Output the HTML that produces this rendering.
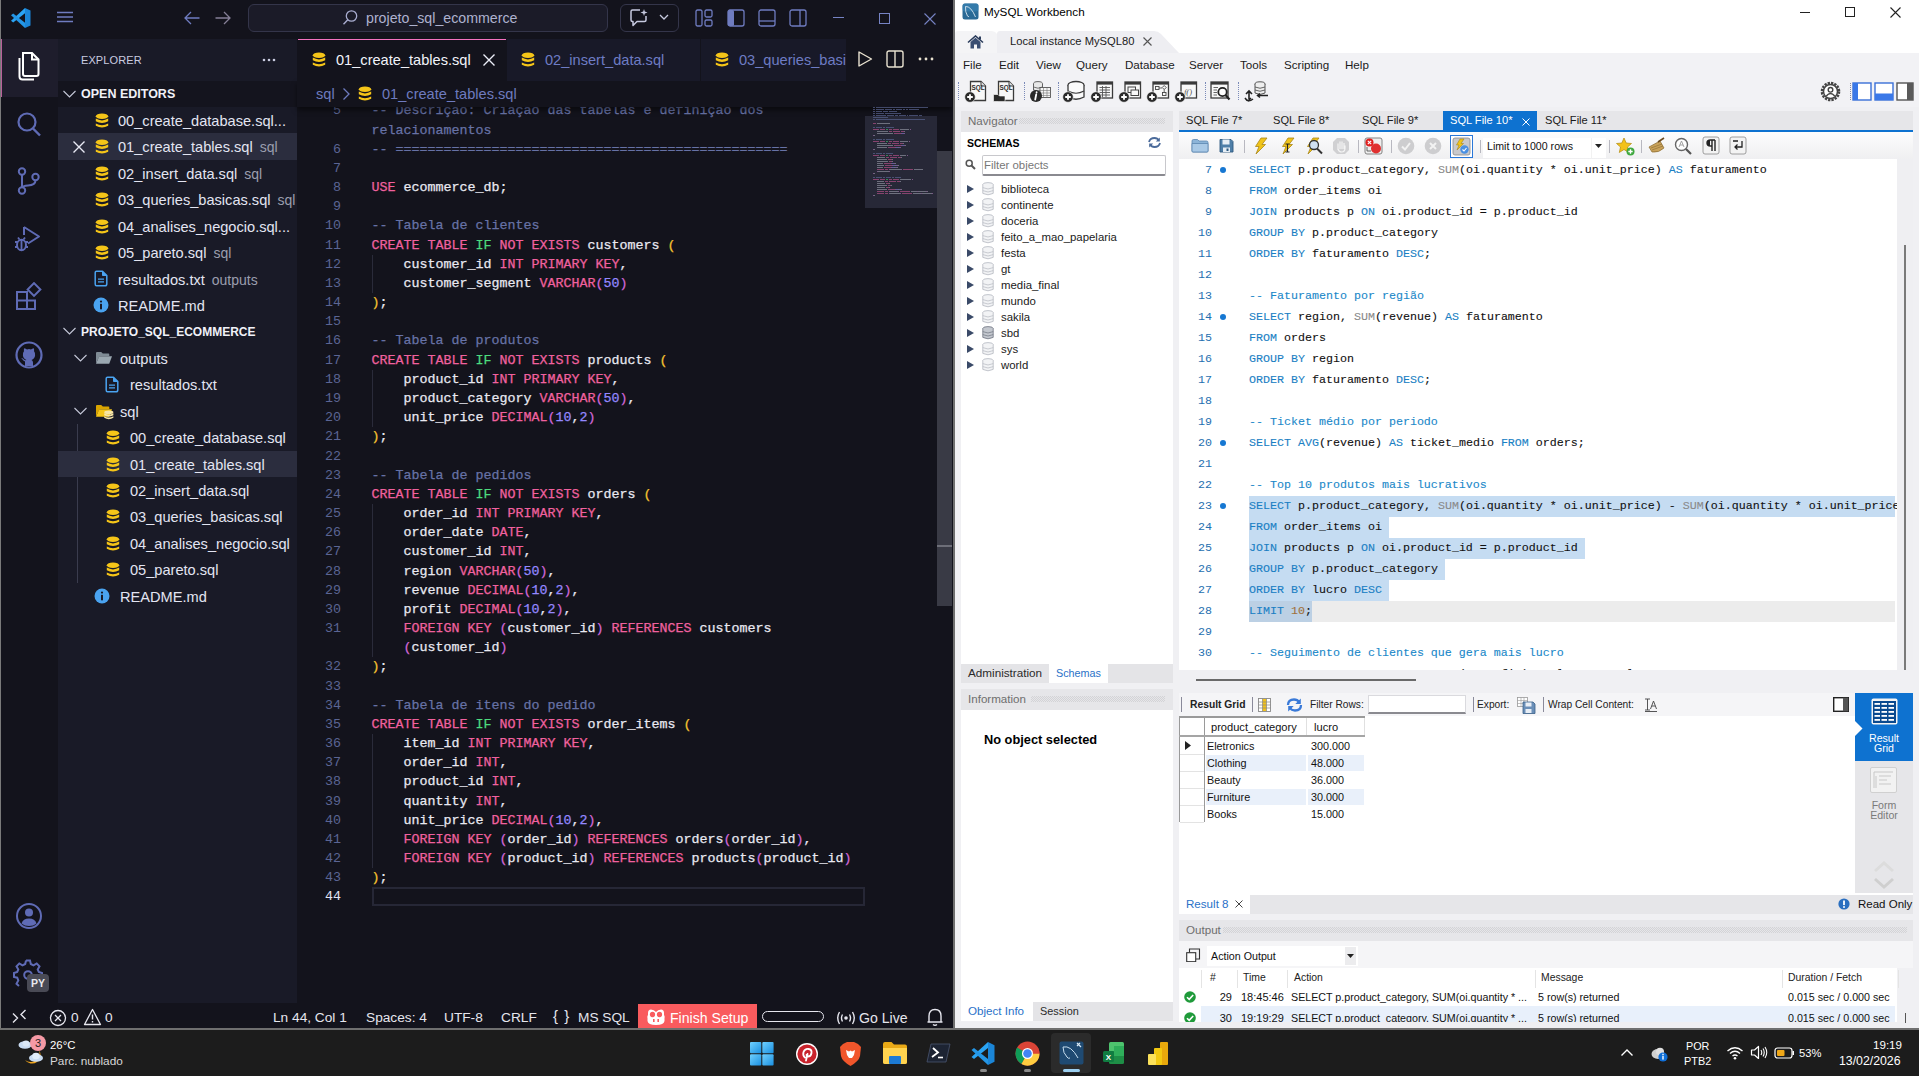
<!DOCTYPE html>
<html><head><meta charset="utf-8">
<style>
*{margin:0;padding:0;box-sizing:border-box}
html,body{width:1919px;height:1076px;overflow:hidden;background:#6f6f6f;font-family:"Liberation Sans",sans-serif}
.a{position:absolute}
.mono{font-family:"Liberation Mono",monospace}
svg{display:block}
#vsc{position:absolute;left:0;top:0;width:955px;height:1028px;background:#13131c;overflow:hidden}
#wb{position:absolute;left:955px;top:0;width:964px;height:1028px;background:#f0f0f3;overflow:hidden}
#tb{position:absolute;left:0;top:1030px;width:1919px;height:46px;background:#1c1c1c}
</style></head><body>

<div id="vsc">
<div class="a" style="left:0;top:0;width:953px;height:39px;background:#13131c"></div>
<div class="a" style="left:58px;top:39px;width:239px;height:964px;background:#191a27"></div>
<div class="a" style="left:297px;top:39px;width:656px;height:964px;background:#13131c"></div>
<svg class="a" style="left:10px;top:7px" width="22" height="22" viewBox="0 0 22 22"><path d="M15 1 L20.5 3.6 V18.4 L15 21Z" fill="#1b86d8"/><path d="M15 1 L15 6.2 L3.2 15.6 L1 13.8Z" fill="#2aa4f4"/><path d="M15 21 L15 15.8 L3.2 6.4 L1 8.2Z" fill="#2496e6"/></svg>
<svg class="a" style="left:56px;top:10px" width="18" height="14" viewBox="0 0 18 14"><path d="M1 2.5H17M1 7H17M1 11.5H17" stroke="#6f7cc0" stroke-width="1.3"/></svg>
<svg class="a" style="left:183px;top:10px" width="18" height="16" viewBox="0 0 18 16"><path d="M16.5 8H2M8 2L2 8L8 14" fill="none" stroke="#6f7cc0" stroke-width="1.3"/></svg>
<svg class="a" style="left:214px;top:10px" width="18" height="16" viewBox="0 0 18 16"><path d="M1.5 8H16M10 2L16 8L10 14" fill="none" stroke="#857f96" stroke-width="1.3"/></svg>
<div class="a" style="left:248px;top:4px;width:360px;height:28px;border:1px solid #34354a;border-radius:6px;background:#1b1b28"></div>
<svg class="a" style="left:342px;top:9px" width="17" height="17" viewBox="0 0 17 17"><circle cx="9.5" cy="7" r="5.2" fill="none" stroke="#a9add0" stroke-width="1.3"/><path d="M5.8 10.8L1.5 15.2" stroke="#a9add0" stroke-width="1.4"/></svg>
<div class="a" style="left:366px;top:9px;font-size:14.2px;line-height:18px;color:#aeb2cf">projeto_sql_ecommerce</div>
<div class="a" style="left:620px;top:4px;width:59px;height:28px;border:1px solid #34354a;border-radius:6px"></div>
<svg class="a" style="left:628px;top:8px" width="22" height="20" viewBox="0 0 22 20"><path d="M3 3.5 Q3 2 4.5 2 H12 M18 8 V12 Q18 13.5 16.5 13.5 H9 L5 17.5 V13.5 H4.5 Q3 13.5 3 12 V3.5" fill="none" stroke="#c7cae0" stroke-width="1.5" stroke-linejoin="round"/><path d="M16 1 L16.8 3.6 L19.5 4.5 L16.8 5.4 L16 8 L15.2 5.4 L12.5 4.5 L15.2 3.6Z" fill="#c7cae0"/></svg>
<svg class="a" style="left:659px;top:13px" width="10" height="8" viewBox="0 0 10 8"><path d="M1 2L5 6L9 2" fill="none" stroke="#c7cae0" stroke-width="1.3"/></svg>
<svg class="a" style="left:695px;top:9px" width="18" height="18" viewBox="0 0 18 18"><rect x="1" y="1" width="6" height="16" rx="1.5" fill="none" stroke="#6f7cc0" stroke-width="1.3"/><rect x="10" y="1" width="7" height="7" rx="1.5" fill="none" stroke="#6f7cc0" stroke-width="1.3"/><rect x="10" y="11" width="7" height="6" rx="1.5" fill="none" stroke="#6f7cc0" stroke-width="1.3"/></svg>
<svg class="a" style="left:727px;top:9px" width="18" height="18" viewBox="0 0 18 18"><rect x="1" y="1" width="16" height="16" rx="2" fill="none" stroke="#6f7cc0" stroke-width="1.3"/><rect x="1" y="1" width="6" height="16" rx="1.5" fill="#6f7cc0"/></svg>
<svg class="a" style="left:758px;top:9px" width="18" height="18" viewBox="0 0 18 18"><rect x="1" y="1" width="16" height="16" rx="2" fill="none" stroke="#6f7cc0" stroke-width="1.3"/><path d="M1 12H17" stroke="#6f7cc0" stroke-width="1.3"/></svg>
<svg class="a" style="left:789px;top:9px" width="18" height="18" viewBox="0 0 18 18"><rect x="1" y="1" width="16" height="16" rx="2" fill="none" stroke="#6f7cc0" stroke-width="1.3"/><path d="M11 1V17" stroke="#6f7cc0" stroke-width="1.3"/></svg>
<div class="a" style="left:833px;top:17px;width:11px;height:1px;background:#7683c4"></div>
<div class="a" style="left:879px;top:13px;width:11px;height:11px;border:1px solid #7683c4"></div>
<svg class="a" style="left:924px;top:13px" width="12" height="12" viewBox="0 0 12 12"><path d="M0.5 0.5L11.5 11.5M11.5 0.5L0.5 11.5" stroke="#7683c4" stroke-width="1.1"/></svg>
<div class="a" style="left:1px;top:39px;width:57px;height:58px;background:#1e1d2c"></div>
<div class="a" style="left:1px;top:39px;width:1px;height:58px;background:#b8609a"></div>
<svg class="a" style="left:15px;top:51px" width="28" height="30" viewBox="0 0 28 30"><path d="M8 2 H17 L23.5 8.5 V23 Q23.5 25 21.5 25 H10 Q8 25 8 23Z" fill="none" stroke="#fff" stroke-width="2"/><path d="M17 2 V8.5 H23.5" fill="none" stroke="#fff" stroke-width="2"/><path d="M4.5 7 V25.5 Q4.5 28.5 7.5 28.5 H19" fill="none" stroke="#fff" stroke-width="2"/></svg>
<svg class="a" style="left:14px;top:110px" width="30" height="30" viewBox="0 0 30 30"><circle cx="13" cy="12" r="8.5" fill="none" stroke="#5f6bb5" stroke-width="2.2"/><path d="M19 18.5 L26 25.5" stroke="#5f6bb5" stroke-width="2.4"/></svg>
<svg class="a" style="left:14px;top:166px" width="30" height="30" viewBox="0 0 30 30"><circle cx="8" cy="5.5" r="3.2" fill="none" stroke="#5f6bb5" stroke-width="2"/><circle cx="8" cy="24.5" r="3.2" fill="none" stroke="#5f6bb5" stroke-width="2"/><circle cx="21.5" cy="11" r="3.2" fill="none" stroke="#5f6bb5" stroke-width="2"/><path d="M8 8.7V21.3 M21.5 14.2 Q21.5 19 14 19.5 Q8.5 20 8 21.3" fill="none" stroke="#5f6bb5" stroke-width="2"/></svg>
<svg class="a" style="left:13px;top:224px" width="30" height="30" viewBox="0 0 30 30"><path d="M11 3 L26 12.5 L15 19.5" fill="none" stroke="#5f6bb5" stroke-width="2" stroke-linejoin="round"/><path d="M11 3V11" stroke="#5f6bb5" stroke-width="2"/><ellipse cx="8.5" cy="21" rx="4.5" ry="5.2" fill="none" stroke="#5f6bb5" stroke-width="2"/><path d="M2 18H5 M2 23H4.5 M12 18H15 M12.5 23H15 M8.5 16V26 M5 13.5L6.5 15.5 M12 13.5L10.5 15.5" stroke="#5f6bb5" stroke-width="1.8"/></svg>
<svg class="a" style="left:14px;top:282px" width="30" height="30" viewBox="0 0 30 30"><path d="M3 10 H13 V27 H3Z M3 18.5 H21 V27 H13" fill="none" stroke="#5f6bb5" stroke-width="2"/><rect x="15.5" y="3" width="9" height="9" transform="rotate(45 20 7.5)" fill="none" stroke="#5f6bb5" stroke-width="2"/></svg>
<svg class="a" style="left:14px;top:340px" width="30" height="30" viewBox="0 0 30 30"><circle cx="15" cy="15" r="12.5" fill="none" stroke="#5f6bb5" stroke-width="2.2"/><path d="M11 26 V21.5 Q9.5 21 8.5 19.5 Q7.8 18.2 7 18 Q9 17.8 10 19.5 Q11 20.5 12.5 20 Q11 19.5 9.8 18 Q8.5 16 9 13.5 Q9.2 12.2 10 11.2 Q9.6 9.6 10.2 8.2 Q12 8.4 13 9.4 Q15 8.8 17 9.4 Q18 8.4 19.8 8.2 Q20.4 9.6 20 11.2 Q20.8 12.2 21 13.5 Q21.5 16 20.2 18 Q19 19.5 17.5 20 Q19 20.8 19 22.5 V26" fill="#5f6bb5"/></svg>
<svg class="a" style="left:14px;top:901px" width="30" height="30" viewBox="0 0 30 30"><circle cx="15" cy="15" r="12" fill="none" stroke="#5f6bb5" stroke-width="2"/><circle cx="15" cy="11.5" r="4" fill="#5f6bb5"/><path d="M7.5 22.5 Q9 17.5 15 17.5 Q21 17.5 22.5 22.5 Q19.5 25 15 25 Q10.5 25 7.5 22.5Z" fill="#5f6bb5"/></svg>
<svg class="a" style="left:13px;top:958px" width="30" height="30" viewBox="0 0 30 30"><path d="M13 2.5 H17 L17.8 6 L20.5 7.3 L23.7 5.5 L26.5 8.3 L24.7 11.5 L25.8 14 L29 15 V19 L25.8 19.7" fill="none" stroke="#5f6bb5" stroke-width="2"/><path d="M13 2.5 L12.2 6 L9.5 7.3 L6.3 5.5 L3.5 8.3 L5.3 11.5 L4.2 14 L1 15 V19 L4.2 19.7 L5.3 22.5 L3.5 25.7 L6 28" fill="none" stroke="#5f6bb5" stroke-width="2"/><circle cx="15" cy="17" r="3.8" fill="none" stroke="#5f6bb5" stroke-width="2"/></svg>
<div class="a" style="left:27px;top:974px;width:22px;height:18px;border-radius:4px;background:#494a55;color:#e8e8ee;font-size:10.5px;font-weight:bold;line-height:18px;text-align:center">PY</div>
<div class="a" style="left:81px;top:52px;font-size:11px;line-height:16px;color:#c9cce0;letter-spacing:0.1px">EXPLORER</div>
<div class="a" style="left:262px;top:58px;width:14px;height:4px"><svg width="14" height="4"><circle cx="2" cy="2" r="1.3" fill="#c9cce0"/><circle cx="7" cy="2" r="1.3" fill="#c9cce0"/><circle cx="12" cy="2" r="1.3" fill="#c9cce0"/></svg></div>
<div class="a" style="left:58px;top:81px;width:239px;height:26px;background:#14141e"></div>
<svg class="a" style="left:62px;top:87px" width="15" height="14" viewBox="0 0 15 14"><path d="M1.5 4 L7.5 10 L13.5 4" fill="none" stroke="#c5c8d8" stroke-width="1.1"/></svg>
<div class="a" style="left:81px;top:86px;font-size:12.5px;line-height:17px;font-weight:bold;color:#f0f1f8">OPEN EDITORS</div>
<div class="a" style="left:58px;top:133px;width:239px;height:27px;background:#2b2d3e"></div>
<svg class="a" style="left:95px;top:113px" width="14" height="16" viewBox="0 0 14 16"><ellipse cx="7" cy="3.2" rx="6.2" ry="2.8" fill="#f5c518"/><path d="M0.8 5.6 Q7 9.2 13.2 5.6 V8.2 Q7 11.6 0.8 8.2Z" fill="#f5c518"/><path d="M0.8 10.4 Q7 14 13.2 10.4 V12.8 Q7 16.4 0.8 12.8Z" fill="#f5c518"/></svg>
<div class="a" style="left:118px;top:111px;height:20px;line-height:20px;font-size:14.6px;color:#e3e5f2;white-space:nowrap">00_create_database.sql...</div>
<svg class="a" style="left:95px;top:139px" width="14" height="16" viewBox="0 0 14 16"><ellipse cx="7" cy="3.2" rx="6.2" ry="2.8" fill="#f5c518"/><path d="M0.8 5.6 Q7 9.2 13.2 5.6 V8.2 Q7 11.6 0.8 8.2Z" fill="#f5c518"/><path d="M0.8 10.4 Q7 14 13.2 10.4 V12.8 Q7 16.4 0.8 12.8Z" fill="#f5c518"/></svg>
<div class="a" style="left:118px;top:137px;height:20px;line-height:20px;font-size:14.6px;color:#e3e5f2;white-space:nowrap">01_create_tables.sql<span style="color:#9b9eae;font-size:14px;margin-left:7px">sql</span></div>
<svg class="a" style="left:95px;top:166px" width="14" height="16" viewBox="0 0 14 16"><ellipse cx="7" cy="3.2" rx="6.2" ry="2.8" fill="#f5c518"/><path d="M0.8 5.6 Q7 9.2 13.2 5.6 V8.2 Q7 11.6 0.8 8.2Z" fill="#f5c518"/><path d="M0.8 10.4 Q7 14 13.2 10.4 V12.8 Q7 16.4 0.8 12.8Z" fill="#f5c518"/></svg>
<div class="a" style="left:118px;top:164px;height:20px;line-height:20px;font-size:14.6px;color:#e3e5f2;white-space:nowrap">02_insert_data.sql<span style="color:#9b9eae;font-size:14px;margin-left:7px">sql</span></div>
<svg class="a" style="left:95px;top:192px" width="14" height="16" viewBox="0 0 14 16"><ellipse cx="7" cy="3.2" rx="6.2" ry="2.8" fill="#f5c518"/><path d="M0.8 5.6 Q7 9.2 13.2 5.6 V8.2 Q7 11.6 0.8 8.2Z" fill="#f5c518"/><path d="M0.8 10.4 Q7 14 13.2 10.4 V12.8 Q7 16.4 0.8 12.8Z" fill="#f5c518"/></svg>
<div class="a" style="left:118px;top:190px;height:20px;line-height:20px;font-size:14.6px;color:#e3e5f2;white-space:nowrap">03_queries_basicas.sql<span style="color:#9b9eae;font-size:14px;margin-left:7px">sql</span></div>
<svg class="a" style="left:95px;top:219px" width="14" height="16" viewBox="0 0 14 16"><ellipse cx="7" cy="3.2" rx="6.2" ry="2.8" fill="#f5c518"/><path d="M0.8 5.6 Q7 9.2 13.2 5.6 V8.2 Q7 11.6 0.8 8.2Z" fill="#f5c518"/><path d="M0.8 10.4 Q7 14 13.2 10.4 V12.8 Q7 16.4 0.8 12.8Z" fill="#f5c518"/></svg>
<div class="a" style="left:118px;top:217px;height:20px;line-height:20px;font-size:14.6px;color:#e3e5f2;white-space:nowrap">04_analises_negocio.sql...</div>
<svg class="a" style="left:95px;top:245px" width="14" height="16" viewBox="0 0 14 16"><ellipse cx="7" cy="3.2" rx="6.2" ry="2.8" fill="#f5c518"/><path d="M0.8 5.6 Q7 9.2 13.2 5.6 V8.2 Q7 11.6 0.8 8.2Z" fill="#f5c518"/><path d="M0.8 10.4 Q7 14 13.2 10.4 V12.8 Q7 16.4 0.8 12.8Z" fill="#f5c518"/></svg>
<div class="a" style="left:118px;top:243px;height:20px;line-height:20px;font-size:14.6px;color:#e3e5f2;white-space:nowrap">05_pareto.sql<span style="color:#9b9eae;font-size:14px;margin-left:7px">sql</span></div>
<svg class="a" style="left:72px;top:140px" width="14" height="14" viewBox="0 0 14 14"><path d="M1.5 1.5L12.5 12.5M12.5 1.5L1.5 12.5" stroke="#e8eaf5" stroke-width="1.4"/></svg>
<svg class="a" style="left:94px;top:270px" width="14" height="17" viewBox="0 0 14 17"><path d="M2.5 1.2 H8.5 L12.8 5.5 V14 Q12.8 15.8 11 15.8 H2.5 Q1.2 15.8 1.2 14 V2.5 Q1.2 1.2 2.5 1.2Z" fill="none" stroke="#4aa3f0" stroke-width="1.5" stroke-linejoin="round"/><path d="M8.5 1.2 V5.5 H12.8" fill="#4aa3f0" stroke="#4aa3f0" stroke-width="1"/><path d="M4 9.2H10M4 11.8H10" stroke="#4aa3f0" stroke-width="1.2"/></svg>
<div class="a" style="left:118px;top:270px;height:20px;line-height:20px;font-size:14.6px;color:#e3e5f2;white-space:nowrap">resultados.txt<span style="color:#9b9eae;font-size:14px;margin-left:7px">outputs</span></div>
<svg class="a" style="left:93px;top:297px" width="16" height="16" viewBox="0 0 16 16"><circle cx="8" cy="8" r="7.5" fill="#4aa3f0"/><rect x="7" y="6.8" width="2" height="5.5" fill="#191a27"/><circle cx="8" cy="4.6" r="1.1" fill="#191a27"/></svg>
<div class="a" style="left:118px;top:296px;height:20px;line-height:20px;font-size:14.6px;color:#e3e5f2;white-space:nowrap">README.md</div>
<svg class="a" style="left:62px;top:324px" width="15" height="14" viewBox="0 0 15 14"><path d="M1.5 4 L7.5 10 L13.5 4" fill="none" stroke="#c5c8d8" stroke-width="1.1"/></svg>
<div class="a" style="left:81px;top:324px;font-size:12px;line-height:17px;font-weight:bold;color:#f0f1f8">PROJETO_SQL_ECOMMERCE</div>
<svg class="a" style="left:73px;top:351px" width="15" height="14" viewBox="0 0 15 14"><path d="M1.5 4 L7.5 10 L13.5 4" fill="none" stroke="#c5c8d8" stroke-width="1.1"/></svg>
<svg class="a" style="left:95px;top:351px" width="18" height="14" viewBox="0 0 18 14"><path d="M1 12.5 V2 Q1 1 2 1 H6.2 L7.8 2.6 H13.5 Q14.3 2.6 14.3 3.4 V5 H4.5 Z" fill="#7f8b95"/><path d="M4.2 5.2 H17 L14.2 12.8 H1Z" fill="#9aa7b0"/></svg>
<div class="a" style="left:120px;top:349px;height:20px;line-height:20px;font-size:14.6px;color:#e3e5f2;white-space:nowrap">outputs</div>
<svg class="a" style="left:105px;top:376px" width="14" height="17" viewBox="0 0 14 17"><path d="M2.5 1.2 H8.5 L12.8 5.5 V14 Q12.8 15.8 11 15.8 H2.5 Q1.2 15.8 1.2 14 V2.5 Q1.2 1.2 2.5 1.2Z" fill="none" stroke="#4aa3f0" stroke-width="1.5" stroke-linejoin="round"/><path d="M8.5 1.2 V5.5 H12.8" fill="#4aa3f0" stroke="#4aa3f0" stroke-width="1"/><path d="M4 9.2H10M4 11.8H10" stroke="#4aa3f0" stroke-width="1.2"/></svg>
<div class="a" style="left:130px;top:375px;height:20px;line-height:20px;font-size:14.6px;color:#e3e5f2;white-space:nowrap">resultados.txt</div>
<svg class="a" style="left:73px;top:404px" width="15" height="14" viewBox="0 0 15 14"><path d="M1.5 4 L7.5 10 L13.5 4" fill="none" stroke="#c5c8d8" stroke-width="1.1"/></svg>
<svg class="a" style="left:95px;top:404px" width="19" height="16" viewBox="0 0 19 16"><path d="M1 12.5 V2 Q1 1 2 1 H6.2 L7.8 2.6 H13.5 Q14.3 2.6 14.3 3.4 V5 H4.5 Z" fill="#d9a400"/><path d="M4.2 5.2 H17 L14.2 12.8 H1Z" fill="#f5c518"/><ellipse cx="13.8" cy="8.3" rx="4.6" ry="1.9" fill="#f8e6a6"/><path d="M9.2 9.3 Q13.8 12 18.4 9.3 V11.2 Q13.8 13.9 9.2 11.2Z" fill="#f8e6a6"/><path d="M9.2 12.2 Q13.8 14.9 18.4 12.2 V13.8 Q13.8 16.5 9.2 13.8Z" fill="#f8e6a6"/></svg>
<div class="a" style="left:120px;top:402px;height:20px;line-height:20px;font-size:14.6px;color:#e3e5f2;white-space:nowrap">sql</div>
<div class="a" style="left:77px;top:424px;width:1px;height:159px;background:#3a3c4e"></div>
<div class="a" style="left:58px;top:451px;width:239px;height:26px;background:#2b2d3e"></div>
<svg class="a" style="left:106px;top:430px" width="14" height="16" viewBox="0 0 14 16"><ellipse cx="7" cy="3.2" rx="6.2" ry="2.8" fill="#f5c518"/><path d="M0.8 5.6 Q7 9.2 13.2 5.6 V8.2 Q7 11.6 0.8 8.2Z" fill="#f5c518"/><path d="M0.8 10.4 Q7 14 13.2 10.4 V12.8 Q7 16.4 0.8 12.8Z" fill="#f5c518"/></svg>
<div class="a" style="left:130px;top:428px;height:20px;line-height:20px;font-size:14.6px;color:#e3e5f2;white-space:nowrap">00_create_database.sql</div>
<svg class="a" style="left:106px;top:457px" width="14" height="16" viewBox="0 0 14 16"><ellipse cx="7" cy="3.2" rx="6.2" ry="2.8" fill="#f5c518"/><path d="M0.8 5.6 Q7 9.2 13.2 5.6 V8.2 Q7 11.6 0.8 8.2Z" fill="#f5c518"/><path d="M0.8 10.4 Q7 14 13.2 10.4 V12.8 Q7 16.4 0.8 12.8Z" fill="#f5c518"/></svg>
<div class="a" style="left:130px;top:455px;height:20px;line-height:20px;font-size:14.6px;color:#e3e5f2;white-space:nowrap">01_create_tables.sql</div>
<svg class="a" style="left:106px;top:483px" width="14" height="16" viewBox="0 0 14 16"><ellipse cx="7" cy="3.2" rx="6.2" ry="2.8" fill="#f5c518"/><path d="M0.8 5.6 Q7 9.2 13.2 5.6 V8.2 Q7 11.6 0.8 8.2Z" fill="#f5c518"/><path d="M0.8 10.4 Q7 14 13.2 10.4 V12.8 Q7 16.4 0.8 12.8Z" fill="#f5c518"/></svg>
<div class="a" style="left:130px;top:481px;height:20px;line-height:20px;font-size:14.6px;color:#e3e5f2;white-space:nowrap">02_insert_data.sql</div>
<svg class="a" style="left:106px;top:509px" width="14" height="16" viewBox="0 0 14 16"><ellipse cx="7" cy="3.2" rx="6.2" ry="2.8" fill="#f5c518"/><path d="M0.8 5.6 Q7 9.2 13.2 5.6 V8.2 Q7 11.6 0.8 8.2Z" fill="#f5c518"/><path d="M0.8 10.4 Q7 14 13.2 10.4 V12.8 Q7 16.4 0.8 12.8Z" fill="#f5c518"/></svg>
<div class="a" style="left:130px;top:507px;height:20px;line-height:20px;font-size:14.6px;color:#e3e5f2;white-space:nowrap">03_queries_basicas.sql</div>
<svg class="a" style="left:106px;top:536px" width="14" height="16" viewBox="0 0 14 16"><ellipse cx="7" cy="3.2" rx="6.2" ry="2.8" fill="#f5c518"/><path d="M0.8 5.6 Q7 9.2 13.2 5.6 V8.2 Q7 11.6 0.8 8.2Z" fill="#f5c518"/><path d="M0.8 10.4 Q7 14 13.2 10.4 V12.8 Q7 16.4 0.8 12.8Z" fill="#f5c518"/></svg>
<div class="a" style="left:130px;top:534px;height:20px;line-height:20px;font-size:14.6px;color:#e3e5f2;white-space:nowrap">04_analises_negocio.sql</div>
<svg class="a" style="left:106px;top:562px" width="14" height="16" viewBox="0 0 14 16"><ellipse cx="7" cy="3.2" rx="6.2" ry="2.8" fill="#f5c518"/><path d="M0.8 5.6 Q7 9.2 13.2 5.6 V8.2 Q7 11.6 0.8 8.2Z" fill="#f5c518"/><path d="M0.8 10.4 Q7 14 13.2 10.4 V12.8 Q7 16.4 0.8 12.8Z" fill="#f5c518"/></svg>
<div class="a" style="left:130px;top:560px;height:20px;line-height:20px;font-size:14.6px;color:#e3e5f2;white-space:nowrap">05_pareto.sql</div>
<svg class="a" style="left:94px;top:588px" width="16" height="16" viewBox="0 0 16 16"><circle cx="8" cy="8" r="7.5" fill="#4aa3f0"/><rect x="7" y="6.8" width="2" height="5.5" fill="#191a27"/><circle cx="8" cy="4.6" r="1.1" fill="#191a27"/></svg>
<div class="a" style="left:120px;top:587px;height:20px;line-height:20px;font-size:14.6px;color:#e3e5f2;white-space:nowrap">README.md</div>
<div class="a mono" style="left:299px;top:101.4px;width:42px;height:19.2px;line-height:19.2px;text-align:right;font-size:13.33px;color:#5b6594">5</div>
<div class="a mono" style="left:371.5px;top:101.4px;height:19.2px;line-height:19.2px;font-size:13.33px;color:#e9e9f1;white-space:pre;-webkit-text-stroke:0.25px currentColor"><span style="color:#6772a6">-- Descrição: Criação das tabelas e definição dos</span></div>
<div class="a mono" style="left:371.5px;top:120.6px;height:19.2px;line-height:19.2px;font-size:13.33px;color:#e9e9f1;white-space:pre;-webkit-text-stroke:0.25px currentColor"><span style="color:#6772a6">relacionamentos</span></div>
<div class="a mono" style="left:299px;top:139.7px;width:42px;height:19.2px;line-height:19.2px;text-align:right;font-size:13.33px;color:#5b6594">6</div>
<div class="a mono" style="left:371.5px;top:139.7px;height:19.2px;line-height:19.2px;font-size:13.33px;color:#e9e9f1;white-space:pre;-webkit-text-stroke:0.25px currentColor"><span style="color:#6772a6">-- =================================================</span></div>
<div class="a mono" style="left:299px;top:158.9px;width:42px;height:19.2px;line-height:19.2px;text-align:right;font-size:13.33px;color:#5b6594">7</div>
<div class="a mono" style="left:299px;top:178.1px;width:42px;height:19.2px;line-height:19.2px;text-align:right;font-size:13.33px;color:#5b6594">8</div>
<div class="a mono" style="left:371.5px;top:178.1px;height:19.2px;line-height:19.2px;font-size:13.33px;color:#e9e9f1;white-space:pre;-webkit-text-stroke:0.25px currentColor"><span style="color:#f0619f">USE</span> ecommerce_db;</div>
<div class="a mono" style="left:299px;top:197.3px;width:42px;height:19.2px;line-height:19.2px;text-align:right;font-size:13.33px;color:#5b6594">9</div>
<div class="a mono" style="left:299px;top:216.4px;width:42px;height:19.2px;line-height:19.2px;text-align:right;font-size:13.33px;color:#5b6594">10</div>
<div class="a mono" style="left:371.5px;top:216.4px;height:19.2px;line-height:19.2px;font-size:13.33px;color:#e9e9f1;white-space:pre;-webkit-text-stroke:0.25px currentColor"><span style="color:#6772a6">-- Tabela de clientes</span></div>
<div class="a mono" style="left:299px;top:235.6px;width:42px;height:19.2px;line-height:19.2px;text-align:right;font-size:13.33px;color:#5b6594">11</div>
<div class="a mono" style="left:371.5px;top:235.6px;height:19.2px;line-height:19.2px;font-size:13.33px;color:#e9e9f1;white-space:pre;-webkit-text-stroke:0.25px currentColor"><span style="color:#f0619f">CREATE</span> <span style="color:#f0619f">TABLE</span> <span style="color:#4ddc7e">IF</span> <span style="color:#f0619f">NOT</span> <span style="color:#f0619f">EXISTS</span> customers <span style="color:#f5c331">(</span></div>
<div class="a mono" style="left:299px;top:254.8px;width:42px;height:19.2px;line-height:19.2px;text-align:right;font-size:13.33px;color:#5b6594">12</div>
<div class="a mono" style="left:371.5px;top:254.8px;height:19.2px;line-height:19.2px;font-size:13.33px;color:#e9e9f1;white-space:pre;-webkit-text-stroke:0.25px currentColor">    customer_id <span style="color:#f0619f">INT</span> <span style="color:#f0619f">PRIMARY</span> <span style="color:#f0619f">KEY</span>,</div>
<div class="a mono" style="left:299px;top:273.9px;width:42px;height:19.2px;line-height:19.2px;text-align:right;font-size:13.33px;color:#5b6594">13</div>
<div class="a mono" style="left:371.5px;top:273.9px;height:19.2px;line-height:19.2px;font-size:13.33px;color:#e9e9f1;white-space:pre;-webkit-text-stroke:0.25px currentColor">    customer_segment <span style="color:#f0619f">VARCHAR</span><span style="color:#d067d6">(</span><span style="color:#9488ff">50</span><span style="color:#d067d6">)</span></div>
<div class="a mono" style="left:299px;top:293.1px;width:42px;height:19.2px;line-height:19.2px;text-align:right;font-size:13.33px;color:#5b6594">14</div>
<div class="a mono" style="left:371.5px;top:293.1px;height:19.2px;line-height:19.2px;font-size:13.33px;color:#e9e9f1;white-space:pre;-webkit-text-stroke:0.25px currentColor"><span style="color:#f5c331">)</span>;</div>
<div class="a mono" style="left:299px;top:312.3px;width:42px;height:19.2px;line-height:19.2px;text-align:right;font-size:13.33px;color:#5b6594">15</div>
<div class="a mono" style="left:299px;top:331.4px;width:42px;height:19.2px;line-height:19.2px;text-align:right;font-size:13.33px;color:#5b6594">16</div>
<div class="a mono" style="left:371.5px;top:331.4px;height:19.2px;line-height:19.2px;font-size:13.33px;color:#e9e9f1;white-space:pre;-webkit-text-stroke:0.25px currentColor"><span style="color:#6772a6">-- Tabela de produtos</span></div>
<div class="a mono" style="left:299px;top:350.6px;width:42px;height:19.2px;line-height:19.2px;text-align:right;font-size:13.33px;color:#5b6594">17</div>
<div class="a mono" style="left:371.5px;top:350.6px;height:19.2px;line-height:19.2px;font-size:13.33px;color:#e9e9f1;white-space:pre;-webkit-text-stroke:0.25px currentColor"><span style="color:#f0619f">CREATE</span> <span style="color:#f0619f">TABLE</span> <span style="color:#4ddc7e">IF</span> <span style="color:#f0619f">NOT</span> <span style="color:#f0619f">EXISTS</span> products <span style="color:#f5c331">(</span></div>
<div class="a mono" style="left:299px;top:369.8px;width:42px;height:19.2px;line-height:19.2px;text-align:right;font-size:13.33px;color:#5b6594">18</div>
<div class="a mono" style="left:371.5px;top:369.8px;height:19.2px;line-height:19.2px;font-size:13.33px;color:#e9e9f1;white-space:pre;-webkit-text-stroke:0.25px currentColor">    product_id <span style="color:#f0619f">INT</span> <span style="color:#f0619f">PRIMARY</span> <span style="color:#f0619f">KEY</span>,</div>
<div class="a mono" style="left:299px;top:388.9px;width:42px;height:19.2px;line-height:19.2px;text-align:right;font-size:13.33px;color:#5b6594">19</div>
<div class="a mono" style="left:371.5px;top:388.9px;height:19.2px;line-height:19.2px;font-size:13.33px;color:#e9e9f1;white-space:pre;-webkit-text-stroke:0.25px currentColor">    product_category <span style="color:#f0619f">VARCHAR</span><span style="color:#d067d6">(</span><span style="color:#9488ff">50</span><span style="color:#d067d6">)</span>,</div>
<div class="a mono" style="left:299px;top:408.1px;width:42px;height:19.2px;line-height:19.2px;text-align:right;font-size:13.33px;color:#5b6594">20</div>
<div class="a mono" style="left:371.5px;top:408.1px;height:19.2px;line-height:19.2px;font-size:13.33px;color:#e9e9f1;white-space:pre;-webkit-text-stroke:0.25px currentColor">    unit_price <span style="color:#f0619f">DECIMAL</span><span style="color:#d067d6">(</span><span style="color:#9488ff">10</span>,<span style="color:#9488ff">2</span><span style="color:#d067d6">)</span></div>
<div class="a mono" style="left:299px;top:427.3px;width:42px;height:19.2px;line-height:19.2px;text-align:right;font-size:13.33px;color:#5b6594">21</div>
<div class="a mono" style="left:371.5px;top:427.3px;height:19.2px;line-height:19.2px;font-size:13.33px;color:#e9e9f1;white-space:pre;-webkit-text-stroke:0.25px currentColor"><span style="color:#f5c331">)</span>;</div>
<div class="a mono" style="left:299px;top:446.5px;width:42px;height:19.2px;line-height:19.2px;text-align:right;font-size:13.33px;color:#5b6594">22</div>
<div class="a mono" style="left:299px;top:465.6px;width:42px;height:19.2px;line-height:19.2px;text-align:right;font-size:13.33px;color:#5b6594">23</div>
<div class="a mono" style="left:371.5px;top:465.6px;height:19.2px;line-height:19.2px;font-size:13.33px;color:#e9e9f1;white-space:pre;-webkit-text-stroke:0.25px currentColor"><span style="color:#6772a6">-- Tabela de pedidos</span></div>
<div class="a mono" style="left:299px;top:484.8px;width:42px;height:19.2px;line-height:19.2px;text-align:right;font-size:13.33px;color:#5b6594">24</div>
<div class="a mono" style="left:371.5px;top:484.8px;height:19.2px;line-height:19.2px;font-size:13.33px;color:#e9e9f1;white-space:pre;-webkit-text-stroke:0.25px currentColor"><span style="color:#f0619f">CREATE</span> <span style="color:#f0619f">TABLE</span> <span style="color:#4ddc7e">IF</span> <span style="color:#f0619f">NOT</span> <span style="color:#f0619f">EXISTS</span> orders <span style="color:#f5c331">(</span></div>
<div class="a mono" style="left:299px;top:504.0px;width:42px;height:19.2px;line-height:19.2px;text-align:right;font-size:13.33px;color:#5b6594">25</div>
<div class="a mono" style="left:371.5px;top:504.0px;height:19.2px;line-height:19.2px;font-size:13.33px;color:#e9e9f1;white-space:pre;-webkit-text-stroke:0.25px currentColor">    order_id <span style="color:#f0619f">INT</span> <span style="color:#f0619f">PRIMARY</span> <span style="color:#f0619f">KEY</span>,</div>
<div class="a mono" style="left:299px;top:523.1px;width:42px;height:19.2px;line-height:19.2px;text-align:right;font-size:13.33px;color:#5b6594">26</div>
<div class="a mono" style="left:371.5px;top:523.1px;height:19.2px;line-height:19.2px;font-size:13.33px;color:#e9e9f1;white-space:pre;-webkit-text-stroke:0.25px currentColor">    order_date <span style="color:#f0619f">DATE</span>,</div>
<div class="a mono" style="left:299px;top:542.3px;width:42px;height:19.2px;line-height:19.2px;text-align:right;font-size:13.33px;color:#5b6594">27</div>
<div class="a mono" style="left:371.5px;top:542.3px;height:19.2px;line-height:19.2px;font-size:13.33px;color:#e9e9f1;white-space:pre;-webkit-text-stroke:0.25px currentColor">    customer_id <span style="color:#f0619f">INT</span>,</div>
<div class="a mono" style="left:299px;top:561.5px;width:42px;height:19.2px;line-height:19.2px;text-align:right;font-size:13.33px;color:#5b6594">28</div>
<div class="a mono" style="left:371.5px;top:561.5px;height:19.2px;line-height:19.2px;font-size:13.33px;color:#e9e9f1;white-space:pre;-webkit-text-stroke:0.25px currentColor">    region <span style="color:#f0619f">VARCHAR</span><span style="color:#d067d6">(</span><span style="color:#9488ff">50</span><span style="color:#d067d6">)</span>,</div>
<div class="a mono" style="left:299px;top:580.6px;width:42px;height:19.2px;line-height:19.2px;text-align:right;font-size:13.33px;color:#5b6594">29</div>
<div class="a mono" style="left:371.5px;top:580.6px;height:19.2px;line-height:19.2px;font-size:13.33px;color:#e9e9f1;white-space:pre;-webkit-text-stroke:0.25px currentColor">    revenue <span style="color:#f0619f">DECIMAL</span><span style="color:#d067d6">(</span><span style="color:#9488ff">10</span>,<span style="color:#9488ff">2</span><span style="color:#d067d6">)</span>,</div>
<div class="a mono" style="left:299px;top:599.8px;width:42px;height:19.2px;line-height:19.2px;text-align:right;font-size:13.33px;color:#5b6594">30</div>
<div class="a mono" style="left:371.5px;top:599.8px;height:19.2px;line-height:19.2px;font-size:13.33px;color:#e9e9f1;white-space:pre;-webkit-text-stroke:0.25px currentColor">    profit <span style="color:#f0619f">DECIMAL</span><span style="color:#d067d6">(</span><span style="color:#9488ff">10</span>,<span style="color:#9488ff">2</span><span style="color:#d067d6">)</span>,</div>
<div class="a mono" style="left:299px;top:619.0px;width:42px;height:19.2px;line-height:19.2px;text-align:right;font-size:13.33px;color:#5b6594">31</div>
<div class="a mono" style="left:371.5px;top:619.0px;height:19.2px;line-height:19.2px;font-size:13.33px;color:#e9e9f1;white-space:pre;-webkit-text-stroke:0.25px currentColor">    <span style="color:#f0619f">FOREIGN</span> <span style="color:#f0619f">KEY</span> <span style="color:#d067d6">(</span>customer_id<span style="color:#d067d6">)</span> <span style="color:#f0619f">REFERENCES</span> customers</div>
<div class="a mono" style="left:371.5px;top:638.2px;height:19.2px;line-height:19.2px;font-size:13.33px;color:#e9e9f1;white-space:pre;-webkit-text-stroke:0.25px currentColor">    <span style="color:#d067d6">(</span>customer_id<span style="color:#d067d6">)</span></div>
<div class="a mono" style="left:299px;top:657.3px;width:42px;height:19.2px;line-height:19.2px;text-align:right;font-size:13.33px;color:#5b6594">32</div>
<div class="a mono" style="left:371.5px;top:657.3px;height:19.2px;line-height:19.2px;font-size:13.33px;color:#e9e9f1;white-space:pre;-webkit-text-stroke:0.25px currentColor"><span style="color:#f5c331">)</span>;</div>
<div class="a mono" style="left:299px;top:676.5px;width:42px;height:19.2px;line-height:19.2px;text-align:right;font-size:13.33px;color:#5b6594">33</div>
<div class="a mono" style="left:299px;top:695.7px;width:42px;height:19.2px;line-height:19.2px;text-align:right;font-size:13.33px;color:#5b6594">34</div>
<div class="a mono" style="left:371.5px;top:695.7px;height:19.2px;line-height:19.2px;font-size:13.33px;color:#e9e9f1;white-space:pre;-webkit-text-stroke:0.25px currentColor"><span style="color:#6772a6">-- Tabela de itens do pedido</span></div>
<div class="a mono" style="left:299px;top:714.8px;width:42px;height:19.2px;line-height:19.2px;text-align:right;font-size:13.33px;color:#5b6594">35</div>
<div class="a mono" style="left:371.5px;top:714.8px;height:19.2px;line-height:19.2px;font-size:13.33px;color:#e9e9f1;white-space:pre;-webkit-text-stroke:0.25px currentColor"><span style="color:#f0619f">CREATE</span> <span style="color:#f0619f">TABLE</span> <span style="color:#4ddc7e">IF</span> <span style="color:#f0619f">NOT</span> <span style="color:#f0619f">EXISTS</span> order_items <span style="color:#f5c331">(</span></div>
<div class="a mono" style="left:299px;top:734.0px;width:42px;height:19.2px;line-height:19.2px;text-align:right;font-size:13.33px;color:#5b6594">36</div>
<div class="a mono" style="left:371.5px;top:734.0px;height:19.2px;line-height:19.2px;font-size:13.33px;color:#e9e9f1;white-space:pre;-webkit-text-stroke:0.25px currentColor">    item_id <span style="color:#f0619f">INT</span> <span style="color:#f0619f">PRIMARY</span> <span style="color:#f0619f">KEY</span>,</div>
<div class="a mono" style="left:299px;top:753.2px;width:42px;height:19.2px;line-height:19.2px;text-align:right;font-size:13.33px;color:#5b6594">37</div>
<div class="a mono" style="left:371.5px;top:753.2px;height:19.2px;line-height:19.2px;font-size:13.33px;color:#e9e9f1;white-space:pre;-webkit-text-stroke:0.25px currentColor">    order_id <span style="color:#f0619f">INT</span>,</div>
<div class="a mono" style="left:299px;top:772.4px;width:42px;height:19.2px;line-height:19.2px;text-align:right;font-size:13.33px;color:#5b6594">38</div>
<div class="a mono" style="left:371.5px;top:772.4px;height:19.2px;line-height:19.2px;font-size:13.33px;color:#e9e9f1;white-space:pre;-webkit-text-stroke:0.25px currentColor">    product_id <span style="color:#f0619f">INT</span>,</div>
<div class="a mono" style="left:299px;top:791.5px;width:42px;height:19.2px;line-height:19.2px;text-align:right;font-size:13.33px;color:#5b6594">39</div>
<div class="a mono" style="left:371.5px;top:791.5px;height:19.2px;line-height:19.2px;font-size:13.33px;color:#e9e9f1;white-space:pre;-webkit-text-stroke:0.25px currentColor">    quantity <span style="color:#f0619f">INT</span>,</div>
<div class="a mono" style="left:299px;top:810.7px;width:42px;height:19.2px;line-height:19.2px;text-align:right;font-size:13.33px;color:#5b6594">40</div>
<div class="a mono" style="left:371.5px;top:810.7px;height:19.2px;line-height:19.2px;font-size:13.33px;color:#e9e9f1;white-space:pre;-webkit-text-stroke:0.25px currentColor">    unit_price <span style="color:#f0619f">DECIMAL</span><span style="color:#d067d6">(</span><span style="color:#9488ff">10</span>,<span style="color:#9488ff">2</span><span style="color:#d067d6">)</span>,</div>
<div class="a mono" style="left:299px;top:829.9px;width:42px;height:19.2px;line-height:19.2px;text-align:right;font-size:13.33px;color:#5b6594">41</div>
<div class="a mono" style="left:371.5px;top:829.9px;height:19.2px;line-height:19.2px;font-size:13.33px;color:#e9e9f1;white-space:pre;-webkit-text-stroke:0.25px currentColor">    <span style="color:#f0619f">FOREIGN</span> <span style="color:#f0619f">KEY</span> <span style="color:#d067d6">(</span>order_id<span style="color:#d067d6">)</span> <span style="color:#f0619f">REFERENCES</span> orders<span style="color:#d067d6">(</span>order_id<span style="color:#d067d6">)</span>,</div>
<div class="a mono" style="left:299px;top:849.0px;width:42px;height:19.2px;line-height:19.2px;text-align:right;font-size:13.33px;color:#5b6594">42</div>
<div class="a mono" style="left:371.5px;top:849.0px;height:19.2px;line-height:19.2px;font-size:13.33px;color:#e9e9f1;white-space:pre;-webkit-text-stroke:0.25px currentColor">    <span style="color:#f0619f">FOREIGN</span> <span style="color:#f0619f">KEY</span> <span style="color:#d067d6">(</span>product_id<span style="color:#d067d6">)</span> <span style="color:#f0619f">REFERENCES</span> products<span style="color:#d067d6">(</span>product_id<span style="color:#d067d6">)</span></div>
<div class="a mono" style="left:299px;top:868.2px;width:42px;height:19.2px;line-height:19.2px;text-align:right;font-size:13.33px;color:#5b6594">43</div>
<div class="a mono" style="left:371.5px;top:868.2px;height:19.2px;line-height:19.2px;font-size:13.33px;color:#e9e9f1;white-space:pre;-webkit-text-stroke:0.25px currentColor"><span style="color:#f5c331">)</span>;</div>
<div class="a mono" style="left:299px;top:887.4px;width:42px;height:19.2px;line-height:19.2px;text-align:right;font-size:13.33px;color:#e3e5f2">44</div>
<div class="a" style="left:372px;top:254.8px;width:1px;height:38.3px;background:#2a2b3a"></div>
<div class="a" style="left:372px;top:369.8px;width:1px;height:57.5px;background:#2a2b3a"></div>
<div class="a" style="left:372px;top:504.0px;width:1px;height:153.4px;background:#2a2b3a"></div>
<div class="a" style="left:372px;top:734.0px;width:1px;height:134.2px;background:#2a2b3a"></div>
<div class="a" style="left:372px;top:887px;width:493px;height:19px;border:2px solid #262736"></div>
<div class="a" style="left:297px;top:81px;width:655px;height:26px;background:#13131c;box-shadow:0 3px 5px rgba(0,0,0,0.5)"></div>
<div class="a" style="left:297px;top:39px;width:655px;height:42px;background:#13131c"></div>
<div class="a" style="left:298px;top:39px;width:208px;height:42px;background:#13131c"></div>
<div class="a" style="left:298px;top:39px;width:208px;height:1px;background:#f472c0"></div>
<svg class="a" style="left:312px;top:52px" width="14" height="16" viewBox="0 0 14 16"><ellipse cx="7" cy="3.2" rx="6.2" ry="2.8" fill="#f5c518"/><path d="M0.8 5.6 Q7 9.2 13.2 5.6 V8.2 Q7 11.6 0.8 8.2Z" fill="#f5c518"/><path d="M0.8 10.4 Q7 14 13.2 10.4 V12.8 Q7 16.4 0.8 12.8Z" fill="#f5c518"/></svg>
<div class="a" style="left:336px;top:50px;font-size:14.6px;line-height:20px;color:#f2f3fa;white-space:nowrap">01_create_tables.sql</div>
<svg class="a" style="left:482px;top:53px" width="14" height="14" viewBox="0 0 14 14"><path d="M1.5 1.5L12.5 12.5M12.5 1.5L1.5 12.5" stroke="#eceef8" stroke-width="1.4"/></svg>
<div class="a" style="left:507px;top:39px;width:193px;height:42px;background:#181928"></div>
<svg class="a" style="left:521px;top:52px" width="14" height="16" viewBox="0 0 14 16"><ellipse cx="7" cy="3.2" rx="6.2" ry="2.8" fill="#f5c518"/><path d="M0.8 5.6 Q7 9.2 13.2 5.6 V8.2 Q7 11.6 0.8 8.2Z" fill="#f5c518"/><path d="M0.8 10.4 Q7 14 13.2 10.4 V12.8 Q7 16.4 0.8 12.8Z" fill="#f5c518"/></svg>
<div class="a" style="left:545px;top:50px;font-size:14.6px;line-height:20px;color:#6e7cc4;white-space:nowrap">02_insert_data.sql</div>
<div class="a" style="left:701px;top:39px;width:145px;height:42px;background:#181928;overflow:hidden"><div class="a" style="left:38px;top:11px;font-size:14.6px;line-height:20px;color:#6e7cc4;white-space:nowrap">03_queries_basicas.sql</div></div>
<svg class="a" style="left:715px;top:52px" width="14" height="16" viewBox="0 0 14 16"><ellipse cx="7" cy="3.2" rx="6.2" ry="2.8" fill="#f5c518"/><path d="M0.8 5.6 Q7 9.2 13.2 5.6 V8.2 Q7 11.6 0.8 8.2Z" fill="#f5c518"/><path d="M0.8 10.4 Q7 14 13.2 10.4 V12.8 Q7 16.4 0.8 12.8Z" fill="#f5c518"/></svg>
<svg class="a" style="left:856px;top:50px" width="18" height="18" viewBox="0 0 18 18"><path d="M3 2 L15.5 9 L3 16Z" fill="none" stroke="#e9e2d0" stroke-width="1.4" stroke-linejoin="round"/></svg>
<svg class="a" style="left:886px;top:50px" width="18" height="18" viewBox="0 0 18 18"><rect x="1" y="1" width="16" height="16" rx="2" fill="none" stroke="#e9e2d0" stroke-width="1.4"/><path d="M9 1V17" stroke="#e9e2d0" stroke-width="1.4"/></svg>
<svg class="a" style="left:918px;top:57px" width="16" height="4"><circle cx="2" cy="2" r="1.4" fill="#e9e2d0"/><circle cx="8" cy="2" r="1.4" fill="#e9e2d0"/><circle cx="14" cy="2" r="1.4" fill="#e9e2d0"/></svg>
<div class="a" style="left:316px;top:84px;font-size:14.6px;line-height:20px;color:#6e7bbf;white-space:nowrap">sql</div>
<svg class="a" style="left:341px;top:87px" width="10" height="14" viewBox="0 0 10 14"><path d="M2.5 1.5L8 7L2.5 12.5" fill="none" stroke="#6e7bbf" stroke-width="1.3"/></svg>
<svg class="a" style="left:358px;top:86px" width="14" height="16" viewBox="0 0 14 16"><ellipse cx="7" cy="3.2" rx="6.2" ry="2.8" fill="#f5c518"/><path d="M0.8 5.6 Q7 9.2 13.2 5.6 V8.2 Q7 11.6 0.8 8.2Z" fill="#f5c518"/><path d="M0.8 10.4 Q7 14 13.2 10.4 V12.8 Q7 16.4 0.8 12.8Z" fill="#f5c518"/></svg>
<div class="a" style="left:382px;top:84px;font-size:14.6px;line-height:20px;color:#6e7bbf;white-space:nowrap">01_create_tables.sql</div>
<div class="a" style="left:865px;top:116px;width:72px;height:92px;background:#272837"></div>
<div class="a" style="left:873px;top:107px;width:1px;height:1px;background:#58628f;opacity:0.7"></div>
<div class="a" style="left:874px;top:107px;width:1px;height:1px;background:#58628f;opacity:0.7"></div>
<div class="a" style="left:876px;top:107px;width:1px;height:1px;background:#58628f;opacity:0.7"></div>
<div class="a" style="left:877px;top:107px;width:1px;height:1px;background:#58628f;opacity:0.7"></div>
<div class="a" style="left:878px;top:107px;width:1px;height:1px;background:#58628f;opacity:0.7"></div>
<div class="a" style="left:879px;top:107px;width:1px;height:1px;background:#58628f;opacity:0.7"></div>
<div class="a" style="left:880px;top:107px;width:1px;height:1px;background:#58628f;opacity:0.7"></div>
<div class="a" style="left:881px;top:107px;width:1px;height:1px;background:#58628f;opacity:0.7"></div>
<div class="a" style="left:882px;top:107px;width:1px;height:1px;background:#58628f;opacity:0.7"></div>
<div class="a" style="left:883px;top:107px;width:1px;height:1px;background:#58628f;opacity:0.7"></div>
<div class="a" style="left:884px;top:107px;width:1px;height:1px;background:#58628f;opacity:0.7"></div>
<div class="a" style="left:885px;top:107px;width:1px;height:1px;background:#58628f;opacity:0.7"></div>
<div class="a" style="left:886px;top:107px;width:1px;height:1px;background:#58628f;opacity:0.7"></div>
<div class="a" style="left:887px;top:107px;width:1px;height:1px;background:#58628f;opacity:0.7"></div>
<div class="a" style="left:888px;top:107px;width:1px;height:1px;background:#58628f;opacity:0.7"></div>
<div class="a" style="left:889px;top:107px;width:1px;height:1px;background:#58628f;opacity:0.7"></div>
<div class="a" style="left:890px;top:107px;width:1px;height:1px;background:#58628f;opacity:0.7"></div>
<div class="a" style="left:891px;top:107px;width:1px;height:1px;background:#58628f;opacity:0.7"></div>
<div class="a" style="left:892px;top:107px;width:1px;height:1px;background:#58628f;opacity:0.7"></div>
<div class="a" style="left:893px;top:107px;width:1px;height:1px;background:#58628f;opacity:0.7"></div>
<div class="a" style="left:894px;top:107px;width:1px;height:1px;background:#58628f;opacity:0.7"></div>
<div class="a" style="left:895px;top:107px;width:1px;height:1px;background:#58628f;opacity:0.7"></div>
<div class="a" style="left:896px;top:107px;width:1px;height:1px;background:#58628f;opacity:0.7"></div>
<div class="a" style="left:897px;top:107px;width:1px;height:1px;background:#58628f;opacity:0.7"></div>
<div class="a" style="left:898px;top:107px;width:1px;height:1px;background:#58628f;opacity:0.7"></div>
<div class="a" style="left:899px;top:107px;width:1px;height:1px;background:#58628f;opacity:0.7"></div>
<div class="a" style="left:900px;top:107px;width:1px;height:1px;background:#58628f;opacity:0.7"></div>
<div class="a" style="left:901px;top:107px;width:1px;height:1px;background:#58628f;opacity:0.7"></div>
<div class="a" style="left:902px;top:107px;width:1px;height:1px;background:#58628f;opacity:0.7"></div>
<div class="a" style="left:903px;top:107px;width:1px;height:1px;background:#58628f;opacity:0.7"></div>
<div class="a" style="left:904px;top:107px;width:1px;height:1px;background:#58628f;opacity:0.7"></div>
<div class="a" style="left:905px;top:107px;width:1px;height:1px;background:#58628f;opacity:0.7"></div>
<div class="a" style="left:906px;top:107px;width:1px;height:1px;background:#58628f;opacity:0.7"></div>
<div class="a" style="left:907px;top:107px;width:1px;height:1px;background:#58628f;opacity:0.7"></div>
<div class="a" style="left:908px;top:107px;width:1px;height:1px;background:#58628f;opacity:0.7"></div>
<div class="a" style="left:909px;top:107px;width:1px;height:1px;background:#58628f;opacity:0.7"></div>
<div class="a" style="left:910px;top:107px;width:1px;height:1px;background:#58628f;opacity:0.7"></div>
<div class="a" style="left:911px;top:107px;width:1px;height:1px;background:#58628f;opacity:0.7"></div>
<div class="a" style="left:912px;top:107px;width:1px;height:1px;background:#58628f;opacity:0.7"></div>
<div class="a" style="left:913px;top:107px;width:1px;height:1px;background:#58628f;opacity:0.7"></div>
<div class="a" style="left:914px;top:107px;width:1px;height:1px;background:#58628f;opacity:0.7"></div>
<div class="a" style="left:915px;top:107px;width:1px;height:1px;background:#58628f;opacity:0.7"></div>
<div class="a" style="left:916px;top:107px;width:1px;height:1px;background:#58628f;opacity:0.7"></div>
<div class="a" style="left:917px;top:107px;width:1px;height:1px;background:#58628f;opacity:0.7"></div>
<div class="a" style="left:918px;top:107px;width:1px;height:1px;background:#58628f;opacity:0.7"></div>
<div class="a" style="left:919px;top:107px;width:1px;height:1px;background:#58628f;opacity:0.7"></div>
<div class="a" style="left:920px;top:107px;width:1px;height:1px;background:#58628f;opacity:0.7"></div>
<div class="a" style="left:921px;top:107px;width:1px;height:1px;background:#58628f;opacity:0.7"></div>
<div class="a" style="left:922px;top:107px;width:1px;height:1px;background:#58628f;opacity:0.7"></div>
<div class="a" style="left:923px;top:107px;width:1px;height:1px;background:#58628f;opacity:0.7"></div>
<div class="a" style="left:924px;top:107px;width:1px;height:1px;background:#58628f;opacity:0.7"></div>
<div class="a" style="left:925px;top:107px;width:1px;height:1px;background:#58628f;opacity:0.7"></div>
<div class="a" style="left:926px;top:107px;width:1px;height:1px;background:#58628f;opacity:0.7"></div>
<div class="a" style="left:927px;top:107px;width:1px;height:1px;background:#58628f;opacity:0.7"></div>
<div class="a" style="left:873px;top:109px;width:1px;height:1px;background:#58628f;opacity:0.7"></div>
<div class="a" style="left:874px;top:109px;width:1px;height:1px;background:#58628f;opacity:0.7"></div>
<div class="a" style="left:876px;top:109px;width:7px;height:1px;background:#58628f;opacity:0.7"></div>
<div class="a" style="left:883px;top:109px;width:1px;height:1px;background:#58628f;opacity:0.7"></div>
<div class="a" style="left:885px;top:109px;width:7px;height:1px;background:#58628f;opacity:0.7"></div>
<div class="a" style="left:893px;top:109px;width:2px;height:1px;background:#58628f;opacity:0.7"></div>
<div class="a" style="left:896px;top:109px;width:6px;height:1px;background:#58628f;opacity:0.7"></div>
<div class="a" style="left:903px;top:109px;width:2px;height:1px;background:#58628f;opacity:0.7"></div>
<div class="a" style="left:906px;top:109px;width:2px;height:1px;background:#58628f;opacity:0.7"></div>
<div class="a" style="left:909px;top:109px;width:1px;height:1px;background:#58628f;opacity:0.7"></div>
<div class="a" style="left:910px;top:109px;width:1px;height:1px;background:#58628f;opacity:0.7"></div>
<div class="a" style="left:911px;top:109px;width:8px;height:1px;background:#58628f;opacity:0.7"></div>
<div class="a" style="left:873px;top:111px;width:1px;height:1px;background:#58628f;opacity:0.7"></div>
<div class="a" style="left:874px;top:111px;width:1px;height:1px;background:#58628f;opacity:0.7"></div>
<div class="a" style="left:876px;top:111px;width:5px;height:1px;background:#58628f;opacity:0.7"></div>
<div class="a" style="left:881px;top:111px;width:1px;height:1px;background:#58628f;opacity:0.7"></div>
<div class="a" style="left:883px;top:111px;width:5px;height:1px;background:#58628f;opacity:0.7"></div>
<div class="a" style="left:889px;top:111px;width:8px;height:1px;background:#58628f;opacity:0.7"></div>
<div class="a" style="left:873px;top:113px;width:1px;height:1px;background:#58628f;opacity:0.7"></div>
<div class="a" style="left:874px;top:113px;width:1px;height:1px;background:#58628f;opacity:0.7"></div>
<div class="a" style="left:876px;top:113px;width:7px;height:1px;background:#58628f;opacity:0.7"></div>
<div class="a" style="left:883px;top:113px;width:1px;height:1px;background:#58628f;opacity:0.7"></div>
<div class="a" style="left:885px;top:113px;width:2px;height:1px;background:#58628f;opacity:0.7"></div>
<div class="a" style="left:887px;top:113px;width:14px;height:1px;background:#58628f;opacity:0.7"></div>
<div class="a" style="left:873px;top:115px;width:1px;height:1px;background:#58628f;opacity:0.7"></div>
<div class="a" style="left:874px;top:115px;width:1px;height:1px;background:#58628f;opacity:0.7"></div>
<div class="a" style="left:876px;top:115px;width:9px;height:1px;background:#58628f;opacity:0.7"></div>
<div class="a" style="left:885px;top:115px;width:1px;height:1px;background:#58628f;opacity:0.7"></div>
<div class="a" style="left:887px;top:115px;width:7px;height:1px;background:#58628f;opacity:0.7"></div>
<div class="a" style="left:895px;top:115px;width:3px;height:1px;background:#58628f;opacity:0.7"></div>
<div class="a" style="left:899px;top:115px;width:7px;height:1px;background:#58628f;opacity:0.7"></div>
<div class="a" style="left:907px;top:115px;width:1px;height:1px;background:#58628f;opacity:0.7"></div>
<div class="a" style="left:909px;top:115px;width:9px;height:1px;background:#58628f;opacity:0.7"></div>
<div class="a" style="left:919px;top:115px;width:3px;height:1px;background:#58628f;opacity:0.7"></div>
<div class="a" style="left:873px;top:117px;width:15px;height:1px;background:#58628f;opacity:0.7"></div>
<div class="a" style="left:873px;top:119px;width:1px;height:1px;background:#58628f;opacity:0.7"></div>
<div class="a" style="left:874px;top:119px;width:1px;height:1px;background:#58628f;opacity:0.7"></div>
<div class="a" style="left:876px;top:119px;width:1px;height:1px;background:#58628f;opacity:0.7"></div>
<div class="a" style="left:877px;top:119px;width:1px;height:1px;background:#58628f;opacity:0.7"></div>
<div class="a" style="left:878px;top:119px;width:1px;height:1px;background:#58628f;opacity:0.7"></div>
<div class="a" style="left:879px;top:119px;width:1px;height:1px;background:#58628f;opacity:0.7"></div>
<div class="a" style="left:880px;top:119px;width:1px;height:1px;background:#58628f;opacity:0.7"></div>
<div class="a" style="left:881px;top:119px;width:1px;height:1px;background:#58628f;opacity:0.7"></div>
<div class="a" style="left:882px;top:119px;width:1px;height:1px;background:#58628f;opacity:0.7"></div>
<div class="a" style="left:883px;top:119px;width:1px;height:1px;background:#58628f;opacity:0.7"></div>
<div class="a" style="left:884px;top:119px;width:1px;height:1px;background:#58628f;opacity:0.7"></div>
<div class="a" style="left:885px;top:119px;width:1px;height:1px;background:#58628f;opacity:0.7"></div>
<div class="a" style="left:886px;top:119px;width:1px;height:1px;background:#58628f;opacity:0.7"></div>
<div class="a" style="left:887px;top:119px;width:1px;height:1px;background:#58628f;opacity:0.7"></div>
<div class="a" style="left:888px;top:119px;width:1px;height:1px;background:#58628f;opacity:0.7"></div>
<div class="a" style="left:889px;top:119px;width:1px;height:1px;background:#58628f;opacity:0.7"></div>
<div class="a" style="left:890px;top:119px;width:1px;height:1px;background:#58628f;opacity:0.7"></div>
<div class="a" style="left:891px;top:119px;width:1px;height:1px;background:#58628f;opacity:0.7"></div>
<div class="a" style="left:892px;top:119px;width:1px;height:1px;background:#58628f;opacity:0.7"></div>
<div class="a" style="left:893px;top:119px;width:1px;height:1px;background:#58628f;opacity:0.7"></div>
<div class="a" style="left:894px;top:119px;width:1px;height:1px;background:#58628f;opacity:0.7"></div>
<div class="a" style="left:895px;top:119px;width:1px;height:1px;background:#58628f;opacity:0.7"></div>
<div class="a" style="left:896px;top:119px;width:1px;height:1px;background:#58628f;opacity:0.7"></div>
<div class="a" style="left:897px;top:119px;width:1px;height:1px;background:#58628f;opacity:0.7"></div>
<div class="a" style="left:898px;top:119px;width:1px;height:1px;background:#58628f;opacity:0.7"></div>
<div class="a" style="left:899px;top:119px;width:1px;height:1px;background:#58628f;opacity:0.7"></div>
<div class="a" style="left:900px;top:119px;width:1px;height:1px;background:#58628f;opacity:0.7"></div>
<div class="a" style="left:901px;top:119px;width:1px;height:1px;background:#58628f;opacity:0.7"></div>
<div class="a" style="left:902px;top:119px;width:1px;height:1px;background:#58628f;opacity:0.7"></div>
<div class="a" style="left:903px;top:119px;width:1px;height:1px;background:#58628f;opacity:0.7"></div>
<div class="a" style="left:904px;top:119px;width:1px;height:1px;background:#58628f;opacity:0.7"></div>
<div class="a" style="left:905px;top:119px;width:1px;height:1px;background:#58628f;opacity:0.7"></div>
<div class="a" style="left:906px;top:119px;width:1px;height:1px;background:#58628f;opacity:0.7"></div>
<div class="a" style="left:907px;top:119px;width:1px;height:1px;background:#58628f;opacity:0.7"></div>
<div class="a" style="left:908px;top:119px;width:1px;height:1px;background:#58628f;opacity:0.7"></div>
<div class="a" style="left:909px;top:119px;width:1px;height:1px;background:#58628f;opacity:0.7"></div>
<div class="a" style="left:910px;top:119px;width:1px;height:1px;background:#58628f;opacity:0.7"></div>
<div class="a" style="left:911px;top:119px;width:1px;height:1px;background:#58628f;opacity:0.7"></div>
<div class="a" style="left:912px;top:119px;width:1px;height:1px;background:#58628f;opacity:0.7"></div>
<div class="a" style="left:913px;top:119px;width:1px;height:1px;background:#58628f;opacity:0.7"></div>
<div class="a" style="left:914px;top:119px;width:1px;height:1px;background:#58628f;opacity:0.7"></div>
<div class="a" style="left:915px;top:119px;width:1px;height:1px;background:#58628f;opacity:0.7"></div>
<div class="a" style="left:916px;top:119px;width:1px;height:1px;background:#58628f;opacity:0.7"></div>
<div class="a" style="left:917px;top:119px;width:1px;height:1px;background:#58628f;opacity:0.7"></div>
<div class="a" style="left:918px;top:119px;width:1px;height:1px;background:#58628f;opacity:0.7"></div>
<div class="a" style="left:919px;top:119px;width:1px;height:1px;background:#58628f;opacity:0.7"></div>
<div class="a" style="left:920px;top:119px;width:1px;height:1px;background:#58628f;opacity:0.7"></div>
<div class="a" style="left:921px;top:119px;width:1px;height:1px;background:#58628f;opacity:0.7"></div>
<div class="a" style="left:922px;top:119px;width:1px;height:1px;background:#58628f;opacity:0.7"></div>
<div class="a" style="left:923px;top:119px;width:1px;height:1px;background:#58628f;opacity:0.7"></div>
<div class="a" style="left:924px;top:119px;width:1px;height:1px;background:#58628f;opacity:0.7"></div>
<div class="a" style="left:873px;top:123px;width:3px;height:1px;background:#b04f86;opacity:0.7"></div>
<div class="a" style="left:877px;top:123px;width:12px;height:1px;background:#8d8e9c;opacity:0.7"></div>
<div class="a" style="left:889px;top:123px;width:1px;height:1px;background:#8d8e9c;opacity:0.7"></div>
<div class="a" style="left:873px;top:127px;width:1px;height:1px;background:#58628f;opacity:0.7"></div>
<div class="a" style="left:874px;top:127px;width:1px;height:1px;background:#58628f;opacity:0.7"></div>
<div class="a" style="left:876px;top:127px;width:6px;height:1px;background:#58628f;opacity:0.7"></div>
<div class="a" style="left:883px;top:127px;width:2px;height:1px;background:#58628f;opacity:0.7"></div>
<div class="a" style="left:886px;top:127px;width:8px;height:1px;background:#58628f;opacity:0.7"></div>
<div class="a" style="left:873px;top:129px;width:6px;height:1px;background:#b04f86;opacity:0.7"></div>
<div class="a" style="left:880px;top:129px;width:5px;height:1px;background:#b04f86;opacity:0.7"></div>
<div class="a" style="left:886px;top:129px;width:2px;height:1px;background:#3fae66;opacity:0.7"></div>
<div class="a" style="left:889px;top:129px;width:3px;height:1px;background:#b04f86;opacity:0.7"></div>
<div class="a" style="left:893px;top:129px;width:6px;height:1px;background:#b04f86;opacity:0.7"></div>
<div class="a" style="left:900px;top:129px;width:9px;height:1px;background:#8d8e9c;opacity:0.7"></div>
<div class="a" style="left:910px;top:129px;width:1px;height:1px;background:#a06aa8;opacity:0.7"></div>
<div class="a" style="left:877px;top:131px;width:11px;height:1px;background:#8d8e9c;opacity:0.7"></div>
<div class="a" style="left:889px;top:131px;width:3px;height:1px;background:#b04f86;opacity:0.7"></div>
<div class="a" style="left:893px;top:131px;width:7px;height:1px;background:#b04f86;opacity:0.7"></div>
<div class="a" style="left:901px;top:131px;width:3px;height:1px;background:#b04f86;opacity:0.7"></div>
<div class="a" style="left:904px;top:131px;width:1px;height:1px;background:#8d8e9c;opacity:0.7"></div>
<div class="a" style="left:877px;top:133px;width:16px;height:1px;background:#8d8e9c;opacity:0.7"></div>
<div class="a" style="left:894px;top:133px;width:7px;height:1px;background:#b04f86;opacity:0.7"></div>
<div class="a" style="left:901px;top:133px;width:1px;height:1px;background:#a06aa8;opacity:0.7"></div>
<div class="a" style="left:902px;top:133px;width:2px;height:1px;background:#7a70c8;opacity:0.7"></div>
<div class="a" style="left:904px;top:133px;width:1px;height:1px;background:#a06aa8;opacity:0.7"></div>
<div class="a" style="left:873px;top:135px;width:1px;height:1px;background:#a06aa8;opacity:0.7"></div>
<div class="a" style="left:874px;top:135px;width:1px;height:1px;background:#8d8e9c;opacity:0.7"></div>
<div class="a" style="left:873px;top:139px;width:1px;height:1px;background:#58628f;opacity:0.7"></div>
<div class="a" style="left:874px;top:139px;width:1px;height:1px;background:#58628f;opacity:0.7"></div>
<div class="a" style="left:876px;top:139px;width:6px;height:1px;background:#58628f;opacity:0.7"></div>
<div class="a" style="left:883px;top:139px;width:2px;height:1px;background:#58628f;opacity:0.7"></div>
<div class="a" style="left:886px;top:139px;width:8px;height:1px;background:#58628f;opacity:0.7"></div>
<div class="a" style="left:873px;top:141px;width:6px;height:1px;background:#b04f86;opacity:0.7"></div>
<div class="a" style="left:880px;top:141px;width:5px;height:1px;background:#b04f86;opacity:0.7"></div>
<div class="a" style="left:886px;top:141px;width:2px;height:1px;background:#3fae66;opacity:0.7"></div>
<div class="a" style="left:889px;top:141px;width:3px;height:1px;background:#b04f86;opacity:0.7"></div>
<div class="a" style="left:893px;top:141px;width:6px;height:1px;background:#b04f86;opacity:0.7"></div>
<div class="a" style="left:900px;top:141px;width:8px;height:1px;background:#8d8e9c;opacity:0.7"></div>
<div class="a" style="left:909px;top:141px;width:1px;height:1px;background:#a06aa8;opacity:0.7"></div>
<div class="a" style="left:877px;top:143px;width:10px;height:1px;background:#8d8e9c;opacity:0.7"></div>
<div class="a" style="left:888px;top:143px;width:3px;height:1px;background:#b04f86;opacity:0.7"></div>
<div class="a" style="left:892px;top:143px;width:7px;height:1px;background:#b04f86;opacity:0.7"></div>
<div class="a" style="left:900px;top:143px;width:3px;height:1px;background:#b04f86;opacity:0.7"></div>
<div class="a" style="left:903px;top:143px;width:1px;height:1px;background:#8d8e9c;opacity:0.7"></div>
<div class="a" style="left:877px;top:145px;width:16px;height:1px;background:#8d8e9c;opacity:0.7"></div>
<div class="a" style="left:894px;top:145px;width:7px;height:1px;background:#b04f86;opacity:0.7"></div>
<div class="a" style="left:901px;top:145px;width:1px;height:1px;background:#a06aa8;opacity:0.7"></div>
<div class="a" style="left:902px;top:145px;width:2px;height:1px;background:#7a70c8;opacity:0.7"></div>
<div class="a" style="left:904px;top:145px;width:1px;height:1px;background:#a06aa8;opacity:0.7"></div>
<div class="a" style="left:905px;top:145px;width:1px;height:1px;background:#8d8e9c;opacity:0.7"></div>
<div class="a" style="left:877px;top:147px;width:10px;height:1px;background:#8d8e9c;opacity:0.7"></div>
<div class="a" style="left:888px;top:147px;width:7px;height:1px;background:#b04f86;opacity:0.7"></div>
<div class="a" style="left:895px;top:147px;width:1px;height:1px;background:#a06aa8;opacity:0.7"></div>
<div class="a" style="left:896px;top:147px;width:2px;height:1px;background:#7a70c8;opacity:0.7"></div>
<div class="a" style="left:898px;top:147px;width:1px;height:1px;background:#8d8e9c;opacity:0.7"></div>
<div class="a" style="left:899px;top:147px;width:1px;height:1px;background:#7a70c8;opacity:0.7"></div>
<div class="a" style="left:900px;top:147px;width:1px;height:1px;background:#a06aa8;opacity:0.7"></div>
<div class="a" style="left:873px;top:149px;width:1px;height:1px;background:#a06aa8;opacity:0.7"></div>
<div class="a" style="left:874px;top:149px;width:1px;height:1px;background:#8d8e9c;opacity:0.7"></div>
<div class="a" style="left:873px;top:153px;width:1px;height:1px;background:#58628f;opacity:0.7"></div>
<div class="a" style="left:874px;top:153px;width:1px;height:1px;background:#58628f;opacity:0.7"></div>
<div class="a" style="left:876px;top:153px;width:6px;height:1px;background:#58628f;opacity:0.7"></div>
<div class="a" style="left:883px;top:153px;width:2px;height:1px;background:#58628f;opacity:0.7"></div>
<div class="a" style="left:886px;top:153px;width:7px;height:1px;background:#58628f;opacity:0.7"></div>
<div class="a" style="left:873px;top:155px;width:6px;height:1px;background:#b04f86;opacity:0.7"></div>
<div class="a" style="left:880px;top:155px;width:5px;height:1px;background:#b04f86;opacity:0.7"></div>
<div class="a" style="left:886px;top:155px;width:2px;height:1px;background:#3fae66;opacity:0.7"></div>
<div class="a" style="left:889px;top:155px;width:3px;height:1px;background:#b04f86;opacity:0.7"></div>
<div class="a" style="left:893px;top:155px;width:6px;height:1px;background:#b04f86;opacity:0.7"></div>
<div class="a" style="left:900px;top:155px;width:6px;height:1px;background:#8d8e9c;opacity:0.7"></div>
<div class="a" style="left:907px;top:155px;width:1px;height:1px;background:#a06aa8;opacity:0.7"></div>
<div class="a" style="left:877px;top:157px;width:8px;height:1px;background:#8d8e9c;opacity:0.7"></div>
<div class="a" style="left:886px;top:157px;width:3px;height:1px;background:#b04f86;opacity:0.7"></div>
<div class="a" style="left:890px;top:157px;width:7px;height:1px;background:#b04f86;opacity:0.7"></div>
<div class="a" style="left:898px;top:157px;width:3px;height:1px;background:#b04f86;opacity:0.7"></div>
<div class="a" style="left:901px;top:157px;width:1px;height:1px;background:#8d8e9c;opacity:0.7"></div>
<div class="a" style="left:877px;top:159px;width:10px;height:1px;background:#8d8e9c;opacity:0.7"></div>
<div class="a" style="left:888px;top:159px;width:4px;height:1px;background:#b04f86;opacity:0.7"></div>
<div class="a" style="left:892px;top:159px;width:1px;height:1px;background:#8d8e9c;opacity:0.7"></div>
<div class="a" style="left:877px;top:161px;width:11px;height:1px;background:#8d8e9c;opacity:0.7"></div>
<div class="a" style="left:889px;top:161px;width:3px;height:1px;background:#b04f86;opacity:0.7"></div>
<div class="a" style="left:892px;top:161px;width:1px;height:1px;background:#8d8e9c;opacity:0.7"></div>
<div class="a" style="left:877px;top:163px;width:6px;height:1px;background:#8d8e9c;opacity:0.7"></div>
<div class="a" style="left:884px;top:163px;width:7px;height:1px;background:#b04f86;opacity:0.7"></div>
<div class="a" style="left:891px;top:163px;width:1px;height:1px;background:#a06aa8;opacity:0.7"></div>
<div class="a" style="left:892px;top:163px;width:2px;height:1px;background:#7a70c8;opacity:0.7"></div>
<div class="a" style="left:894px;top:163px;width:1px;height:1px;background:#a06aa8;opacity:0.7"></div>
<div class="a" style="left:895px;top:163px;width:1px;height:1px;background:#8d8e9c;opacity:0.7"></div>
<div class="a" style="left:877px;top:165px;width:7px;height:1px;background:#8d8e9c;opacity:0.7"></div>
<div class="a" style="left:885px;top:165px;width:7px;height:1px;background:#b04f86;opacity:0.7"></div>
<div class="a" style="left:892px;top:165px;width:1px;height:1px;background:#a06aa8;opacity:0.7"></div>
<div class="a" style="left:893px;top:165px;width:2px;height:1px;background:#7a70c8;opacity:0.7"></div>
<div class="a" style="left:895px;top:165px;width:1px;height:1px;background:#8d8e9c;opacity:0.7"></div>
<div class="a" style="left:896px;top:165px;width:1px;height:1px;background:#7a70c8;opacity:0.7"></div>
<div class="a" style="left:897px;top:165px;width:1px;height:1px;background:#a06aa8;opacity:0.7"></div>
<div class="a" style="left:898px;top:165px;width:1px;height:1px;background:#8d8e9c;opacity:0.7"></div>
<div class="a" style="left:877px;top:167px;width:6px;height:1px;background:#8d8e9c;opacity:0.7"></div>
<div class="a" style="left:884px;top:167px;width:7px;height:1px;background:#b04f86;opacity:0.7"></div>
<div class="a" style="left:891px;top:167px;width:1px;height:1px;background:#a06aa8;opacity:0.7"></div>
<div class="a" style="left:892px;top:167px;width:2px;height:1px;background:#7a70c8;opacity:0.7"></div>
<div class="a" style="left:894px;top:167px;width:1px;height:1px;background:#8d8e9c;opacity:0.7"></div>
<div class="a" style="left:895px;top:167px;width:1px;height:1px;background:#7a70c8;opacity:0.7"></div>
<div class="a" style="left:896px;top:167px;width:1px;height:1px;background:#a06aa8;opacity:0.7"></div>
<div class="a" style="left:897px;top:167px;width:1px;height:1px;background:#8d8e9c;opacity:0.7"></div>
<div class="a" style="left:877px;top:169px;width:7px;height:1px;background:#b04f86;opacity:0.7"></div>
<div class="a" style="left:885px;top:169px;width:3px;height:1px;background:#b04f86;opacity:0.7"></div>
<div class="a" style="left:889px;top:169px;width:1px;height:1px;background:#a06aa8;opacity:0.7"></div>
<div class="a" style="left:890px;top:169px;width:11px;height:1px;background:#8d8e9c;opacity:0.7"></div>
<div class="a" style="left:901px;top:169px;width:1px;height:1px;background:#a06aa8;opacity:0.7"></div>
<div class="a" style="left:903px;top:169px;width:10px;height:1px;background:#b04f86;opacity:0.7"></div>
<div class="a" style="left:914px;top:169px;width:9px;height:1px;background:#8d8e9c;opacity:0.7"></div>
<div class="a" style="left:877px;top:171px;width:1px;height:1px;background:#a06aa8;opacity:0.7"></div>
<div class="a" style="left:878px;top:171px;width:11px;height:1px;background:#8d8e9c;opacity:0.7"></div>
<div class="a" style="left:889px;top:171px;width:1px;height:1px;background:#a06aa8;opacity:0.7"></div>
<div class="a" style="left:873px;top:173px;width:1px;height:1px;background:#a06aa8;opacity:0.7"></div>
<div class="a" style="left:874px;top:173px;width:1px;height:1px;background:#8d8e9c;opacity:0.7"></div>
<div class="a" style="left:873px;top:177px;width:1px;height:1px;background:#58628f;opacity:0.7"></div>
<div class="a" style="left:874px;top:177px;width:1px;height:1px;background:#58628f;opacity:0.7"></div>
<div class="a" style="left:876px;top:177px;width:6px;height:1px;background:#58628f;opacity:0.7"></div>
<div class="a" style="left:883px;top:177px;width:2px;height:1px;background:#58628f;opacity:0.7"></div>
<div class="a" style="left:886px;top:177px;width:5px;height:1px;background:#58628f;opacity:0.7"></div>
<div class="a" style="left:892px;top:177px;width:2px;height:1px;background:#58628f;opacity:0.7"></div>
<div class="a" style="left:895px;top:177px;width:6px;height:1px;background:#58628f;opacity:0.7"></div>
<div class="a" style="left:873px;top:179px;width:6px;height:1px;background:#b04f86;opacity:0.7"></div>
<div class="a" style="left:880px;top:179px;width:5px;height:1px;background:#b04f86;opacity:0.7"></div>
<div class="a" style="left:886px;top:179px;width:2px;height:1px;background:#3fae66;opacity:0.7"></div>
<div class="a" style="left:889px;top:179px;width:3px;height:1px;background:#b04f86;opacity:0.7"></div>
<div class="a" style="left:893px;top:179px;width:6px;height:1px;background:#b04f86;opacity:0.7"></div>
<div class="a" style="left:900px;top:179px;width:11px;height:1px;background:#8d8e9c;opacity:0.7"></div>
<div class="a" style="left:912px;top:179px;width:1px;height:1px;background:#a06aa8;opacity:0.7"></div>
<div class="a" style="left:877px;top:181px;width:7px;height:1px;background:#8d8e9c;opacity:0.7"></div>
<div class="a" style="left:885px;top:181px;width:3px;height:1px;background:#b04f86;opacity:0.7"></div>
<div class="a" style="left:889px;top:181px;width:7px;height:1px;background:#b04f86;opacity:0.7"></div>
<div class="a" style="left:897px;top:181px;width:3px;height:1px;background:#b04f86;opacity:0.7"></div>
<div class="a" style="left:900px;top:181px;width:1px;height:1px;background:#8d8e9c;opacity:0.7"></div>
<div class="a" style="left:877px;top:183px;width:8px;height:1px;background:#8d8e9c;opacity:0.7"></div>
<div class="a" style="left:886px;top:183px;width:3px;height:1px;background:#b04f86;opacity:0.7"></div>
<div class="a" style="left:889px;top:183px;width:1px;height:1px;background:#8d8e9c;opacity:0.7"></div>
<div class="a" style="left:877px;top:185px;width:10px;height:1px;background:#8d8e9c;opacity:0.7"></div>
<div class="a" style="left:888px;top:185px;width:3px;height:1px;background:#b04f86;opacity:0.7"></div>
<div class="a" style="left:891px;top:185px;width:1px;height:1px;background:#8d8e9c;opacity:0.7"></div>
<div class="a" style="left:877px;top:187px;width:8px;height:1px;background:#8d8e9c;opacity:0.7"></div>
<div class="a" style="left:886px;top:187px;width:3px;height:1px;background:#b04f86;opacity:0.7"></div>
<div class="a" style="left:889px;top:187px;width:1px;height:1px;background:#8d8e9c;opacity:0.7"></div>
<div class="a" style="left:877px;top:189px;width:10px;height:1px;background:#8d8e9c;opacity:0.7"></div>
<div class="a" style="left:888px;top:189px;width:7px;height:1px;background:#b04f86;opacity:0.7"></div>
<div class="a" style="left:895px;top:189px;width:1px;height:1px;background:#a06aa8;opacity:0.7"></div>
<div class="a" style="left:896px;top:189px;width:2px;height:1px;background:#7a70c8;opacity:0.7"></div>
<div class="a" style="left:898px;top:189px;width:1px;height:1px;background:#8d8e9c;opacity:0.7"></div>
<div class="a" style="left:899px;top:189px;width:1px;height:1px;background:#7a70c8;opacity:0.7"></div>
<div class="a" style="left:900px;top:189px;width:1px;height:1px;background:#a06aa8;opacity:0.7"></div>
<div class="a" style="left:901px;top:189px;width:1px;height:1px;background:#8d8e9c;opacity:0.7"></div>
<div class="a" style="left:877px;top:191px;width:7px;height:1px;background:#b04f86;opacity:0.7"></div>
<div class="a" style="left:885px;top:191px;width:3px;height:1px;background:#b04f86;opacity:0.7"></div>
<div class="a" style="left:889px;top:191px;width:1px;height:1px;background:#a06aa8;opacity:0.7"></div>
<div class="a" style="left:890px;top:191px;width:8px;height:1px;background:#8d8e9c;opacity:0.7"></div>
<div class="a" style="left:898px;top:191px;width:1px;height:1px;background:#a06aa8;opacity:0.7"></div>
<div class="a" style="left:900px;top:191px;width:10px;height:1px;background:#b04f86;opacity:0.7"></div>
<div class="a" style="left:911px;top:191px;width:6px;height:1px;background:#8d8e9c;opacity:0.7"></div>
<div class="a" style="left:917px;top:191px;width:1px;height:1px;background:#a06aa8;opacity:0.7"></div>
<div class="a" style="left:918px;top:191px;width:8px;height:1px;background:#8d8e9c;opacity:0.7"></div>
<div class="a" style="left:926px;top:191px;width:1px;height:1px;background:#a06aa8;opacity:0.7"></div>
<div class="a" style="left:927px;top:191px;width:1px;height:1px;background:#8d8e9c;opacity:0.7"></div>
<div class="a" style="left:877px;top:193px;width:7px;height:1px;background:#b04f86;opacity:0.7"></div>
<div class="a" style="left:885px;top:193px;width:3px;height:1px;background:#b04f86;opacity:0.7"></div>
<div class="a" style="left:889px;top:193px;width:1px;height:1px;background:#a06aa8;opacity:0.7"></div>
<div class="a" style="left:890px;top:193px;width:10px;height:1px;background:#8d8e9c;opacity:0.7"></div>
<div class="a" style="left:900px;top:193px;width:1px;height:1px;background:#a06aa8;opacity:0.7"></div>
<div class="a" style="left:902px;top:193px;width:10px;height:1px;background:#b04f86;opacity:0.7"></div>
<div class="a" style="left:913px;top:193px;width:8px;height:1px;background:#8d8e9c;opacity:0.7"></div>
<div class="a" style="left:921px;top:193px;width:1px;height:1px;background:#a06aa8;opacity:0.7"></div>
<div class="a" style="left:922px;top:193px;width:10px;height:1px;background:#8d8e9c;opacity:0.7"></div>
<div class="a" style="left:932px;top:193px;width:1px;height:1px;background:#a06aa8;opacity:0.7"></div>
<div class="a" style="left:873px;top:195px;width:1px;height:1px;background:#a06aa8;opacity:0.7"></div>
<div class="a" style="left:874px;top:195px;width:1px;height:1px;background:#8d8e9c;opacity:0.7"></div>
<div class="a" style="left:937px;top:151px;width:15px;height:455px;background:#393a45"></div>
<div class="a" style="left:937px;top:545px;width:15px;height:2px;background:#6d6e78"></div>
<div class="a" style="left:1px;top:1003px;width:951px;height:25px;background:#13131c"></div>
<svg class="a" style="left:11px;top:1008px" width="16" height="17" viewBox="0 0 16 17"><path d="M2 5.5 L6.5 10 L2 14.5 M14.5 2 L10 6.5 L14.5 11" fill="none" stroke="#e6e6ee" stroke-width="1.4"/></svg>
<svg class="a" style="left:49px;top:1009px" width="18" height="18" viewBox="0 0 18 18"><circle cx="9" cy="9" r="7.5" fill="none" stroke="#e6e6ee" stroke-width="1.3"/><path d="M6 6L12 12M12 6L6 12" stroke="#e6e6ee" stroke-width="1.3"/></svg>
<div class="a" style="left:71px;top:1008.5px;font-size:13.7px;line-height:18px;color:#e6e6ee;white-space:nowrap">0</div>
<svg class="a" style="left:83px;top:1008px" width="19" height="18" viewBox="0 0 19 18"><path d="M9.5 1.5 L17.5 16.5 H1.5Z" fill="none" stroke="#e6e6ee" stroke-width="1.3" stroke-linejoin="round"/><path d="M9.5 6.5V11.5M9.5 13V14.5" stroke="#e6e6ee" stroke-width="1.4"/></svg>
<div class="a" style="left:105px;top:1008.5px;font-size:13.7px;line-height:18px;color:#e6e6ee;white-space:nowrap">0</div>
<div class="a" style="left:273px;top:1008.5px;font-size:13.7px;line-height:18px;color:#e6e6ee;white-space:nowrap">Ln 44, Col 1</div>
<div class="a" style="left:366px;top:1008.5px;font-size:13.7px;line-height:18px;color:#e6e6ee;white-space:nowrap">Spaces: 4</div>
<div class="a" style="left:444px;top:1008.5px;font-size:13.7px;line-height:18px;color:#e6e6ee;white-space:nowrap">UTF-8</div>
<div class="a" style="left:501px;top:1008.5px;font-size:13.7px;line-height:18px;color:#e6e6ee;white-space:nowrap">CRLF</div>
<div class="a" style="left:578px;top:1008.5px;font-size:13.7px;line-height:18px;color:#e6e6ee;white-space:nowrap">MS SQL</div>
<div class="a" style="left:553px;top:1006px;font-size:15px;line-height:20px;color:#e6e6ee;letter-spacing:1px">{ }</div>
<div class="a" style="left:638px;top:1004px;width:119px;height:24px;background:#f95b5e"></div>
<svg class="a" style="left:646px;top:1007px" width="20" height="20" viewBox="0 0 20 20"><path d="M5 2.5 Q2 2.5 2 6 V8 Q1 9.5 1.5 11 V14 Q2 18 10 18 Q18 18 18.5 14 V11 Q19 9.5 18 8 V6 Q18 2.5 15 2.5 Q12 2.5 10 5 Q8 2.5 5 2.5Z" fill="#fff"/><ellipse cx="6.5" cy="7.5" rx="2.6" ry="2.8" fill="#f95b5e"/><ellipse cx="13.5" cy="7.5" rx="2.6" ry="2.8" fill="#f95b5e"/><rect x="7" y="12" width="1.6" height="3" fill="#f95b5e"/><rect x="11.4" y="12" width="1.6" height="3" fill="#f95b5e"/></svg>
<div class="a" style="left:670px;top:1008.5px;font-size:14.1px;line-height:18px;color:#fff;white-space:nowrap">Finish Setup</div>
<div class="a" style="left:762px;top:1011px;width:62px;height:11px;border:1.5px solid #e6e6ee;border-radius:6px"></div>
<svg class="a" style="left:835px;top:1009px" width="22" height="18" viewBox="0 0 22 18"><circle cx="11" cy="9" r="1.8" fill="#e6e6ee"/><path d="M7.5 5.5 Q5.5 9 7.5 12.5 M14.5 5.5 Q16.5 9 14.5 12.5 M4.5 3 Q1 9 4.5 15 M17.5 3 Q21 9 17.5 15" fill="none" stroke="#e6e6ee" stroke-width="1.4"/></svg>
<div class="a" style="left:859px;top:1008.5px;font-size:14.1px;line-height:18px;color:#e6e6ee;white-space:nowrap">Go Live</div>
<svg class="a" style="left:926px;top:1007px" width="18" height="20" viewBox="0 0 18 20"><path d="M3 15 V9 Q3 2.5 9 2.5 Q15 2.5 15 9 V15 H16.5 M1.5 15H16.5 M7 17.5 Q9 19 11 17.5" fill="none" stroke="#e6e6ee" stroke-width="1.4"/></svg>
<div class="a" style="left:0;top:0;width:1px;height:1028px;background:#7a7a7a"></div>
<div class="a" style="left:953px;top:0;width:2px;height:1028px;background:#6f6f6f"></div>
</div>
<div id="wb">
<div class="a" style="left:0px;top:0px;width:964px;height:53px;background:#ffffff;"></div>
<svg class="a" style="left:7px;top:3px" width="17" height="17" viewBox="0 0 17 17"><rect x="0.5" y="0.5" width="16" height="16" rx="2.5" fill="#2a6a96"/><rect x="0.5" y="0.5" width="16" height="8" rx="2.5" fill="#3b86b8" opacity="0.6"/><path d="M3.5 3.5 Q9 3 13.5 14 M3.5 3.5 Q3 9 5.5 13 Q6 14 7 13.5" fill="none" stroke="#d9e8f2" stroke-width="0.9"/></svg>
<div class="a" style="left:29px;top:4px;height:16px;line-height:16px;font-size:11.7px;color:#000;font-weight:normal;white-space:nowrap;">MySQL Workbench</div>
<div class="a" style="left:845px;top:12px;width:10px;height:1px;background:#222;"></div>
<div class="a" style="left:890px;top:7px;width:10px;height:10px;background:transparent;border:1px solid #222"></div>
<svg class="a" style="left:935px;top:7px" width="11" height="11" viewBox="0 0 11 11"><path d="M0.5 0.5L10.5 10.5M10.5 0.5L0.5 10.5" stroke="#222" stroke-width="1.1"/></svg>
<svg class="a" style="left:0px;top:30px" width="240" height="23" viewBox="0 0 240 23"><path d="M0 23 V4 Q0 1 3 1 H36 Q40 1 42 4 V23Z" fill="#f4f4f6"/><path d="M42 23 V4 Q42 1 45 1 H199 Q203 1 206 4 L224 23Z" fill="#eeeef2"/></svg>
<svg class="a" style="left:12px;top:35px" width="17" height="14" viewBox="0 0 17 14"><path d="M1 7.5 L8.5 1 L16 7.5" fill="none" stroke="#2b3d5c" stroke-width="1.6"/><path d="M3.5 7 V13.5 H7 V9.5 H10 V13.5 H13.5 V7 L8.5 2.8Z" fill="#3a4e72"/><rect x="12" y="1.5" width="2" height="3" fill="#2b3d5c"/></svg>
<div class="a" style="left:55px;top:33px;height:16px;line-height:16px;font-size:11.2px;color:#1a1a1a;font-weight:normal;white-space:nowrap;">Local instance MySQL80</div>
<svg class="a" style="left:188px;top:37px" width="9" height="9" viewBox="0 0 9 9"><path d="M0.5 0.5L8.5 8.5M8.5 0.5L0.5 8.5" stroke="#555" stroke-width="1.1"/></svg>
<div class="a" style="left:0px;top:53px;width:964px;height:54px;background:#f2f2f5;"></div>
<div class="a" style="left:8px;top:57px;height:16px;line-height:16px;font-size:11.6px;color:#1a1a1a;font-weight:normal;white-space:nowrap;">File</div>
<div class="a" style="left:44px;top:57px;height:16px;line-height:16px;font-size:11.6px;color:#1a1a1a;font-weight:normal;white-space:nowrap;">Edit</div>
<div class="a" style="left:81px;top:57px;height:16px;line-height:16px;font-size:11.6px;color:#1a1a1a;font-weight:normal;white-space:nowrap;">View</div>
<div class="a" style="left:121px;top:57px;height:16px;line-height:16px;font-size:11.6px;color:#1a1a1a;font-weight:normal;white-space:nowrap;">Query</div>
<div class="a" style="left:170px;top:57px;height:16px;line-height:16px;font-size:11.6px;color:#1a1a1a;font-weight:normal;white-space:nowrap;">Database</div>
<div class="a" style="left:234px;top:57px;height:16px;line-height:16px;font-size:11.6px;color:#1a1a1a;font-weight:normal;white-space:nowrap;">Server</div>
<div class="a" style="left:285px;top:57px;height:16px;line-height:16px;font-size:11.6px;color:#1a1a1a;font-weight:normal;white-space:nowrap;">Tools</div>
<div class="a" style="left:329px;top:57px;height:16px;line-height:16px;font-size:11.6px;color:#1a1a1a;font-weight:normal;white-space:nowrap;">Scripting</div>
<div class="a" style="left:390px;top:57px;height:16px;line-height:16px;font-size:11.6px;color:#1a1a1a;font-weight:normal;white-space:nowrap;">Help</div>
<div class="a" style="left:3px;top:82px;width:1px;height:18px;border-left:1px dotted #7a8ab8"></div>
<svg class="a" style="left:9px;top:80px" width="26" height="23" viewBox="0 0 26 23"><path d="M6.5 1.5 H17 L21.5 6 V20.5 H6.5Z" fill="#f8f8f8" stroke="#3a3a3a" stroke-width="1.3"/><path d="M17 1.5 V6 H21.5" fill="#e0e0e0" stroke="#3a3a3a" stroke-width="1"/><text x="7.6" y="10" font-family="Liberation Sans" font-size="6.4" font-weight="bold" fill="#2a2a2a">SQL</text><circle cx="6" cy="17" r="5.3" fill="#2a2a2a" stroke="#fff" stroke-width="0.6"/><path d="M3.2 17H8.8M6 14.2V19.8" stroke="#fff" stroke-width="1.8"/></svg>
<svg class="a" style="left:37px;top:80px" width="26" height="23" viewBox="0 0 26 23"><path d="M6.5 1.5 H17 L21.5 6 V20.5 H6.5Z" fill="#f8f8f8" stroke="#3a3a3a" stroke-width="1.3"/><path d="M17 1.5 V6 H21.5" fill="#e0e0e0" stroke="#3a3a3a" stroke-width="1"/><text x="7.6" y="10" font-family="Liberation Sans" font-size="6.4" font-weight="bold" fill="#2a2a2a">SQL</text><path d="M1.5 21.5 V14.5 H6 L7.5 16 H13 V21.5Z" fill="#2a2a2a" stroke="#fff" stroke-width="0.6"/></svg>
<div class="a" style="left:69px;top:82px;width:1px;height:18px;border-left:1px dotted #7a8ab8"></div>
<svg class="a" style="left:74px;top:80px" width="26" height="23" viewBox="0 0 26 23"><ellipse cx="9" cy="3.8" rx="4.5" ry="2.2" fill="#e8e8e8" stroke="#555" stroke-width="0.9"/><path d="M4.5 3.8V10Q9 12.4 13.5 10V3.8" fill="#e8e8e8" stroke="#555" stroke-width="0.9"/><path d="M4.5 7Q9 9.4 13.5 7" fill="none" stroke="#555" stroke-width="0.8"/><rect x="11" y="7.5" width="10.5" height="10" fill="#f4f4f4" stroke="#555" stroke-width="0.9"/><path d="M11 10.5H21.5M11 13H21.5M11 15.5H21.5M14.5 7.5V17.5M18 7.5V17.5" stroke="#777" stroke-width="0.6"/><circle cx="7" cy="16" r="6" fill="#2a2a2a"/><path d="M7.6 12.2 V12.4 M7.2 14.5 L6.2 19.5" stroke="#fff" stroke-width="1.8" stroke-linecap="round"/></svg>
<div class="a" style="left:103px;top:82px;width:1px;height:18px;border-left:1px dotted #7a8ab8"></div>
<svg class="a" style="left:107px;top:80px" width="26" height="23" viewBox="0 0 26 23"><ellipse cx="14" cy="5" rx="8" ry="3.5" fill="#fafafa" stroke="#3a3a3a" stroke-width="1.3"/><path d="M6 5V17Q14 21.5 22 17V5" fill="#fafafa" stroke="#3a3a3a" stroke-width="1.3"/><path d="M6 11Q14 15.5 22 11" fill="none" stroke="#3a3a3a" stroke-width="1.2"/><circle cx="6" cy="17" r="5.3" fill="#2a2a2a" stroke="#fff" stroke-width="0.6"/><path d="M3.2 17H8.8M6 14.2V19.8" stroke="#fff" stroke-width="1.8"/></svg>
<svg class="a" style="left:135px;top:80px" width="26" height="23" viewBox="0 0 26 23"><rect x="7" y="2" width="15.5" height="16" fill="#f8f8f8" stroke="#3a3a3a" stroke-width="1.3"/><rect x="7" y="2" width="15.5" height="2.6" fill="#3a3a3a"/><path d="M9.5 7.5H20M9.5 10H20M9.5 12.5H20M9.5 15H20M12.5 6V17M16 6V17" stroke="#555" stroke-width="0.9"/><circle cx="6" cy="17" r="5.3" fill="#2a2a2a" stroke="#fff" stroke-width="0.6"/><path d="M3.2 17H8.8M6 14.2V19.8" stroke="#fff" stroke-width="1.8"/></svg>
<svg class="a" style="left:163px;top:80px" width="26" height="23" viewBox="0 0 26 23"><rect x="7" y="2" width="15.5" height="16" fill="#f8f8f8" stroke="#3a3a3a" stroke-width="1.3"/><rect x="7" y="2" width="15.5" height="2.6" fill="#3a3a3a"/><rect x="10" y="7" width="7.5" height="5.5" fill="none" stroke="#444" stroke-width="1"/><rect x="13" y="10" width="7.5" height="5.5" fill="#f8f8f8" stroke="#444" stroke-width="1"/><circle cx="6" cy="17" r="5.3" fill="#2a2a2a" stroke="#fff" stroke-width="0.6"/><path d="M3.2 17H8.8M6 14.2V19.8" stroke="#fff" stroke-width="1.8"/></svg>
<svg class="a" style="left:191px;top:80px" width="26" height="23" viewBox="0 0 26 23"><rect x="7" y="2" width="15.5" height="16" fill="#f8f8f8" stroke="#3a3a3a" stroke-width="1.3"/><rect x="7" y="2" width="15.5" height="2.6" fill="#3a3a3a"/><rect x="9.5" y="6.5" width="3.5" height="3" fill="none" stroke="#444" stroke-width="0.9"/><rect x="16.5" y="12.5" width="3.5" height="3" fill="none" stroke="#444" stroke-width="0.9"/><path d="M18.2 5.5L20.2 7.5L18.2 9.5L16.2 7.5Z" fill="none" stroke="#444" stroke-width="0.9"/><path d="M13 8H16M18.2 9.5V12.5" stroke="#444" stroke-width="0.8"/><circle cx="6" cy="17" r="5.3" fill="#2a2a2a" stroke="#fff" stroke-width="0.6"/><path d="M3.2 17H8.8M6 14.2V19.8" stroke="#fff" stroke-width="1.8"/></svg>
<svg class="a" style="left:219px;top:80px" width="26" height="23" viewBox="0 0 26 23"><rect x="7" y="2" width="15.5" height="16" fill="#f8f8f8" stroke="#3a3a3a" stroke-width="1.3"/><rect x="7" y="2" width="15.5" height="2.6" fill="#3a3a3a"/><text x="10" y="14.5" font-family="Liberation Serif" font-style="italic" font-size="8.5" fill="#555">f()</text><circle cx="6" cy="17" r="5.3" fill="#2a2a2a" stroke="#fff" stroke-width="0.6"/><path d="M3.2 17H8.8M6 14.2V19.8" stroke="#fff" stroke-width="1.8"/></svg>
<div class="a" style="left:250px;top:82px;width:1px;height:18px;border-left:1px dotted #7a8ab8"></div>
<svg class="a" style="left:254px;top:80px" width="26" height="23" viewBox="0 0 26 23"><rect x="2" y="2" width="17" height="16" fill="#f8f8f8" stroke="#3a3a3a" stroke-width="1.3"/><rect x="2" y="2" width="17" height="2.6" fill="#3a3a3a"/><path d="M4.5 7.5H9M4.5 10H8M4.5 12.5H8M4.5 15H8" stroke="#555" stroke-width="0.9"/><circle cx="13.5" cy="12" r="4.2" fill="#fff" stroke="#222" stroke-width="1.8"/><path d="M16.5 15L20.5 19.5" stroke="#222" stroke-width="2.2"/></svg>
<div class="a" style="left:283px;top:82px;width:1px;height:18px;border-left:1px dotted #7a8ab8"></div>
<svg class="a" style="left:287px;top:80px" width="28" height="23" viewBox="0 0 28 23"><ellipse cx="18" cy="4" rx="5" ry="2.2" fill="#eee" stroke="#555" stroke-width="1"/><path d="M13 4V13Q18 16 23 13V4" fill="#eee" stroke="#555" stroke-width="1"/><path d="M13 7Q18 9.5 23 7M13 10Q18 12.5 23 10" fill="none" stroke="#555" stroke-width="0.9"/><path d="M26 15.5H16M18 13.5L15.5 15.5L18 17.5" fill="none" stroke="#222" stroke-width="1.5"/><path d="M4 14 L7 11 L10 14 M7 11.5 V19 M6 21 L9 18" fill="none" stroke="#222" stroke-width="1.6"/><path d="M3 18 Q6 23 11 19" fill="none" stroke="#222" stroke-width="1.5"/></svg>
<svg class="a" style="left:865px;top:81px" width="21" height="21" viewBox="0 0 21 21"><circle cx="10.5" cy="10.5" r="8.6" fill="none" stroke="#444" stroke-width="2.4" stroke-dasharray="2.3 1.1"/><circle cx="10.5" cy="10.5" r="7" fill="#fff" stroke="#444" stroke-width="1.5"/><circle cx="10.5" cy="8.8" r="2.3" fill="none" stroke="#444" stroke-width="1.4"/><path d="M6.3 15Q10.5 10 14.7 15" fill="none" stroke="#444" stroke-width="1.4"/></svg>
<div class="a" style="left:895px;top:83px;width:1px;height:17px;border-left:1px dotted #8a8aa0"></div>
<svg class="a" style="left:897px;top:82px" width="62" height="19" viewBox="0 0 62 19"><rect x="1" y="1" width="18" height="17" fill="#fff" stroke="#3a70d8" stroke-width="1.4"/><rect x="1" y="1" width="5" height="17" fill="#3a78e8"/><rect x="23" y="1" width="18" height="17" fill="#fff" stroke="#3a70d8" stroke-width="1.4"/><rect x="23" y="11.5" width="18" height="6.5" fill="#3a78e8"/><rect x="45" y="1" width="16" height="17" fill="#fff" stroke="#555" stroke-width="1.4"/><rect x="55" y="1" width="6" height="17" fill="#5a5a5a"/></svg>
<div class="a" style="left:6px;top:111px;width:212px;height:21px;background:#e6e6e9;"></div>
<div class="a" style="left:13px;top:113px;height:16px;line-height:16px;font-size:11.6px;color:#6e6e6e;font-weight:normal;white-space:nowrap;">Navigator</div>
<div class="a" style="left:64px;top:118px;width:146px;height:6px;background-image:linear-gradient(45deg,#c4c4c8 25%,transparent 25%,transparent 75%,#c4c4c8 75%),linear-gradient(45deg,#c4c4c8 25%,transparent 25%,transparent 75%,#c4c4c8 75%);background-size:2px 2px;background-position:0 0,1px 1px;opacity:0.55"></div>
<div class="a" style="left:6px;top:132px;width:212px;height:523px;background:#ffffff;"></div>
<div class="a" style="left:12px;top:135px;height:16px;line-height:16px;font-size:10.5px;color:#000;font-weight:bold;white-space:nowrap;">SCHEMAS</div>
<svg class="a" style="left:192px;top:136px" width="15" height="13" viewBox="0 0 15 13"><path d="M2 6 Q3 2 7.5 2 Q10.5 2 12 4.5 M13 7 Q12 11 7.5 11 Q4.5 11 3 8.5" fill="none" stroke="#4a6a9a" stroke-width="1.8"/><path d="M12.8 1.5V5.5H8.8Z M2.2 11.5V7.5H6.2Z" fill="#4a6a9a"/></svg>
<svg class="a" style="left:10px;top:159px" width="11" height="11" viewBox="0 0 11 11"><circle cx="4.2" cy="4.2" r="3" fill="none" stroke="#555" stroke-width="1.5"/><path d="M6.5 6.5L10 10" stroke="#555" stroke-width="2"/></svg>
<div class="a" style="left:27px;top:155px;width:184px;height:21px;background:#fff;border:1px solid #c8c8cc;border-bottom:2px solid #8a8a90;border-radius:2px"></div>
<div class="a" style="left:29px;top:157px;height:16px;line-height:16px;font-size:11.4px;color:#777;font-weight:normal;white-space:nowrap;">Filter objects</div>
<svg class="a" style="left:11px;top:183.5px" width="9" height="10" viewBox="0 0 9 10"><path d="M1 1 L8 5 L1 9Z" fill="#3a4a68"/></svg>
<svg class="a" style="left:27px;top:181.5px" width="12" height="14" viewBox="0 0 12 14"><ellipse cx="6" cy="2.6" rx="5.2" ry="2" fill="#f2f3f5" stroke="#b4b8c0" stroke-width="0.8"/><path d="M0.8 2.6V11.4Q6 14.2 11.2 11.4V2.6" fill="#f2f3f5" stroke="#b4b8c0" stroke-width="0.8"/><path d="M0.8 5.6Q6 8.4 11.2 5.6M0.8 8.6Q6 11.4 11.2 8.6" fill="none" stroke="#b4b8c0" stroke-width="0.7"/></svg>
<div class="a" style="left:46px;top:180.5px;height:16px;line-height:16px;font-size:11.4px;color:#1a1a1a;font-weight:normal;white-space:nowrap;">biblioteca</div>
<svg class="a" style="left:11px;top:199.5px" width="9" height="10" viewBox="0 0 9 10"><path d="M1 1 L8 5 L1 9Z" fill="#3a4a68"/></svg>
<svg class="a" style="left:27px;top:197.5px" width="12" height="14" viewBox="0 0 12 14"><ellipse cx="6" cy="2.6" rx="5.2" ry="2" fill="#f2f3f5" stroke="#b4b8c0" stroke-width="0.8"/><path d="M0.8 2.6V11.4Q6 14.2 11.2 11.4V2.6" fill="#f2f3f5" stroke="#b4b8c0" stroke-width="0.8"/><path d="M0.8 5.6Q6 8.4 11.2 5.6M0.8 8.6Q6 11.4 11.2 8.6" fill="none" stroke="#b4b8c0" stroke-width="0.7"/></svg>
<div class="a" style="left:46px;top:196.5px;height:16px;line-height:16px;font-size:11.4px;color:#1a1a1a;font-weight:normal;white-space:nowrap;">continente</div>
<svg class="a" style="left:11px;top:215.5px" width="9" height="10" viewBox="0 0 9 10"><path d="M1 1 L8 5 L1 9Z" fill="#3a4a68"/></svg>
<svg class="a" style="left:27px;top:213.5px" width="12" height="14" viewBox="0 0 12 14"><ellipse cx="6" cy="2.6" rx="5.2" ry="2" fill="#f2f3f5" stroke="#b4b8c0" stroke-width="0.8"/><path d="M0.8 2.6V11.4Q6 14.2 11.2 11.4V2.6" fill="#f2f3f5" stroke="#b4b8c0" stroke-width="0.8"/><path d="M0.8 5.6Q6 8.4 11.2 5.6M0.8 8.6Q6 11.4 11.2 8.6" fill="none" stroke="#b4b8c0" stroke-width="0.7"/></svg>
<div class="a" style="left:46px;top:212.5px;height:16px;line-height:16px;font-size:11.4px;color:#1a1a1a;font-weight:normal;white-space:nowrap;">doceria</div>
<svg class="a" style="left:11px;top:231.5px" width="9" height="10" viewBox="0 0 9 10"><path d="M1 1 L8 5 L1 9Z" fill="#3a4a68"/></svg>
<svg class="a" style="left:27px;top:229.5px" width="12" height="14" viewBox="0 0 12 14"><ellipse cx="6" cy="2.6" rx="5.2" ry="2" fill="#f2f3f5" stroke="#b4b8c0" stroke-width="0.8"/><path d="M0.8 2.6V11.4Q6 14.2 11.2 11.4V2.6" fill="#f2f3f5" stroke="#b4b8c0" stroke-width="0.8"/><path d="M0.8 5.6Q6 8.4 11.2 5.6M0.8 8.6Q6 11.4 11.2 8.6" fill="none" stroke="#b4b8c0" stroke-width="0.7"/></svg>
<div class="a" style="left:46px;top:228.5px;height:16px;line-height:16px;font-size:11.4px;color:#1a1a1a;font-weight:normal;white-space:nowrap;">feito_a_mao_papelaria</div>
<svg class="a" style="left:11px;top:247.5px" width="9" height="10" viewBox="0 0 9 10"><path d="M1 1 L8 5 L1 9Z" fill="#3a4a68"/></svg>
<svg class="a" style="left:27px;top:245.5px" width="12" height="14" viewBox="0 0 12 14"><ellipse cx="6" cy="2.6" rx="5.2" ry="2" fill="#f2f3f5" stroke="#b4b8c0" stroke-width="0.8"/><path d="M0.8 2.6V11.4Q6 14.2 11.2 11.4V2.6" fill="#f2f3f5" stroke="#b4b8c0" stroke-width="0.8"/><path d="M0.8 5.6Q6 8.4 11.2 5.6M0.8 8.6Q6 11.4 11.2 8.6" fill="none" stroke="#b4b8c0" stroke-width="0.7"/></svg>
<div class="a" style="left:46px;top:244.5px;height:16px;line-height:16px;font-size:11.4px;color:#1a1a1a;font-weight:normal;white-space:nowrap;">festa</div>
<svg class="a" style="left:11px;top:263.5px" width="9" height="10" viewBox="0 0 9 10"><path d="M1 1 L8 5 L1 9Z" fill="#3a4a68"/></svg>
<svg class="a" style="left:27px;top:261.5px" width="12" height="14" viewBox="0 0 12 14"><ellipse cx="6" cy="2.6" rx="5.2" ry="2" fill="#f2f3f5" stroke="#b4b8c0" stroke-width="0.8"/><path d="M0.8 2.6V11.4Q6 14.2 11.2 11.4V2.6" fill="#f2f3f5" stroke="#b4b8c0" stroke-width="0.8"/><path d="M0.8 5.6Q6 8.4 11.2 5.6M0.8 8.6Q6 11.4 11.2 8.6" fill="none" stroke="#b4b8c0" stroke-width="0.7"/></svg>
<div class="a" style="left:46px;top:260.5px;height:16px;line-height:16px;font-size:11.4px;color:#1a1a1a;font-weight:normal;white-space:nowrap;">gt</div>
<svg class="a" style="left:11px;top:279.5px" width="9" height="10" viewBox="0 0 9 10"><path d="M1 1 L8 5 L1 9Z" fill="#3a4a68"/></svg>
<svg class="a" style="left:27px;top:277.5px" width="12" height="14" viewBox="0 0 12 14"><ellipse cx="6" cy="2.6" rx="5.2" ry="2" fill="#f2f3f5" stroke="#b4b8c0" stroke-width="0.8"/><path d="M0.8 2.6V11.4Q6 14.2 11.2 11.4V2.6" fill="#f2f3f5" stroke="#b4b8c0" stroke-width="0.8"/><path d="M0.8 5.6Q6 8.4 11.2 5.6M0.8 8.6Q6 11.4 11.2 8.6" fill="none" stroke="#b4b8c0" stroke-width="0.7"/></svg>
<div class="a" style="left:46px;top:276.5px;height:16px;line-height:16px;font-size:11.4px;color:#1a1a1a;font-weight:normal;white-space:nowrap;">media_final</div>
<svg class="a" style="left:11px;top:295.5px" width="9" height="10" viewBox="0 0 9 10"><path d="M1 1 L8 5 L1 9Z" fill="#3a4a68"/></svg>
<svg class="a" style="left:27px;top:293.5px" width="12" height="14" viewBox="0 0 12 14"><ellipse cx="6" cy="2.6" rx="5.2" ry="2" fill="#f2f3f5" stroke="#b4b8c0" stroke-width="0.8"/><path d="M0.8 2.6V11.4Q6 14.2 11.2 11.4V2.6" fill="#f2f3f5" stroke="#b4b8c0" stroke-width="0.8"/><path d="M0.8 5.6Q6 8.4 11.2 5.6M0.8 8.6Q6 11.4 11.2 8.6" fill="none" stroke="#b4b8c0" stroke-width="0.7"/></svg>
<div class="a" style="left:46px;top:292.5px;height:16px;line-height:16px;font-size:11.4px;color:#1a1a1a;font-weight:normal;white-space:nowrap;">mundo</div>
<svg class="a" style="left:11px;top:311.5px" width="9" height="10" viewBox="0 0 9 10"><path d="M1 1 L8 5 L1 9Z" fill="#3a4a68"/></svg>
<svg class="a" style="left:27px;top:309.5px" width="12" height="14" viewBox="0 0 12 14"><ellipse cx="6" cy="2.6" rx="5.2" ry="2" fill="#f2f3f5" stroke="#b4b8c0" stroke-width="0.8"/><path d="M0.8 2.6V11.4Q6 14.2 11.2 11.4V2.6" fill="#f2f3f5" stroke="#b4b8c0" stroke-width="0.8"/><path d="M0.8 5.6Q6 8.4 11.2 5.6M0.8 8.6Q6 11.4 11.2 8.6" fill="none" stroke="#b4b8c0" stroke-width="0.7"/></svg>
<div class="a" style="left:46px;top:308.5px;height:16px;line-height:16px;font-size:11.4px;color:#1a1a1a;font-weight:normal;white-space:nowrap;">sakila</div>
<svg class="a" style="left:11px;top:327.5px" width="9" height="10" viewBox="0 0 9 10"><path d="M1 1 L8 5 L1 9Z" fill="#3a4a68"/></svg>
<svg class="a" style="left:27px;top:325.5px" width="12" height="14" viewBox="0 0 12 14"><ellipse cx="6" cy="2.6" rx="5.2" ry="2" fill="#c4c8cf" stroke="#6e7480" stroke-width="0.8"/><path d="M0.8 2.6V11.4Q6 14.2 11.2 11.4V2.6" fill="#c4c8cf" stroke="#6e7480" stroke-width="0.8"/><path d="M0.8 5.6Q6 8.4 11.2 5.6M0.8 8.6Q6 11.4 11.2 8.6" fill="none" stroke="#6e7480" stroke-width="0.7"/></svg>
<div class="a" style="left:46px;top:324.5px;height:16px;line-height:16px;font-size:11.4px;color:#1a1a1a;font-weight:normal;white-space:nowrap;">sbd</div>
<svg class="a" style="left:11px;top:343.5px" width="9" height="10" viewBox="0 0 9 10"><path d="M1 1 L8 5 L1 9Z" fill="#3a4a68"/></svg>
<svg class="a" style="left:27px;top:341.5px" width="12" height="14" viewBox="0 0 12 14"><ellipse cx="6" cy="2.6" rx="5.2" ry="2" fill="#f2f3f5" stroke="#b4b8c0" stroke-width="0.8"/><path d="M0.8 2.6V11.4Q6 14.2 11.2 11.4V2.6" fill="#f2f3f5" stroke="#b4b8c0" stroke-width="0.8"/><path d="M0.8 5.6Q6 8.4 11.2 5.6M0.8 8.6Q6 11.4 11.2 8.6" fill="none" stroke="#b4b8c0" stroke-width="0.7"/></svg>
<div class="a" style="left:46px;top:340.5px;height:16px;line-height:16px;font-size:11.4px;color:#1a1a1a;font-weight:normal;white-space:nowrap;">sys</div>
<svg class="a" style="left:11px;top:359.5px" width="9" height="10" viewBox="0 0 9 10"><path d="M1 1 L8 5 L1 9Z" fill="#3a4a68"/></svg>
<svg class="a" style="left:27px;top:357.5px" width="12" height="14" viewBox="0 0 12 14"><ellipse cx="6" cy="2.6" rx="5.2" ry="2" fill="#f2f3f5" stroke="#b4b8c0" stroke-width="0.8"/><path d="M0.8 2.6V11.4Q6 14.2 11.2 11.4V2.6" fill="#f2f3f5" stroke="#b4b8c0" stroke-width="0.8"/><path d="M0.8 5.6Q6 8.4 11.2 5.6M0.8 8.6Q6 11.4 11.2 8.6" fill="none" stroke="#b4b8c0" stroke-width="0.7"/></svg>
<div class="a" style="left:46px;top:356.5px;height:16px;line-height:16px;font-size:11.4px;color:#1a1a1a;font-weight:normal;white-space:nowrap;">world</div>
<div class="a" style="left:6px;top:655px;width:212px;height:9px;background:#ffffff;"></div>
<div class="a" style="left:6px;top:664px;width:212px;height:19px;background:#e4e4e7;"></div>
<div class="a" style="left:94px;top:664px;width:59px;height:19px;background:#ffffff;"></div>
<div class="a" style="left:13px;top:665px;height:16px;line-height:16px;font-size:11.7px;color:#2a2a2a;font-weight:normal;white-space:nowrap;">Administration</div>
<div class="a" style="left:101px;top:665px;height:16px;line-height:16px;font-size:10.8px;color:#2a72c8;font-weight:normal;white-space:nowrap;">Schemas</div>
<div class="a" style="left:6px;top:689px;width:212px;height:21px;background:#e6e6e9;"></div>
<div class="a" style="left:13px;top:691px;height:16px;line-height:16px;font-size:11.6px;color:#6e6e6e;font-weight:normal;white-space:nowrap;">Information</div>
<div class="a" style="left:76px;top:696px;width:134px;height:6px;background-image:linear-gradient(45deg,#c4c4c8 25%,transparent 25%,transparent 75%,#c4c4c8 75%),linear-gradient(45deg,#c4c4c8 25%,transparent 25%,transparent 75%,#c4c4c8 75%);background-size:2px 2px;background-position:0 0,1px 1px;opacity:0.55"></div>
<div class="a" style="left:6px;top:710px;width:212px;height:292px;background:#ffffff;"></div>
<div class="a" style="left:29px;top:732px;height:16px;line-height:16px;font-size:12.8px;color:#000;font-weight:bold;white-space:nowrap;">No object selected</div>
<div class="a" style="left:6px;top:1002px;width:212px;height:19px;background:#e4e4e7;"></div>
<div class="a" style="left:6px;top:1002px;width:72px;height:19px;background:#ffffff;"></div>
<div class="a" style="left:13px;top:1003px;height:16px;line-height:16px;font-size:11.6px;color:#2a72c8;font-weight:normal;white-space:nowrap;">Object Info</div>
<div class="a" style="left:85px;top:1003px;height:16px;line-height:16px;font-size:10.9px;color:#2a2a2a;font-weight:normal;white-space:nowrap;">Session</div>
<div class="a" style="left:224px;top:111px;width:734px;height:19px;background:#e6e6e9;"></div>
<div class="a" style="left:231px;top:112px;height:16px;line-height:16px;font-size:11.1px;color:#1a1a1a;font-weight:normal;white-space:nowrap;">SQL File 7*</div>
<div class="a" style="left:318px;top:112px;height:16px;line-height:16px;font-size:11.1px;color:#1a1a1a;font-weight:normal;white-space:nowrap;">SQL File 8*</div>
<div class="a" style="left:407px;top:112px;height:16px;line-height:16px;font-size:11.1px;color:#1a1a1a;font-weight:normal;white-space:nowrap;">SQL File 9*</div>
<div class="a" style="left:590px;top:112px;height:16px;line-height:16px;font-size:11.1px;color:#1a1a1a;font-weight:normal;white-space:nowrap;">SQL File 11*</div>
<div class="a" style="left:488px;top:111px;width:94px;height:19px;background:#0e72d0;"></div>
<div class="a" style="left:495px;top:112px;height:16px;line-height:16px;font-size:11.1px;color:#fff;font-weight:normal;white-space:nowrap;">SQL File 10*</div>
<svg class="a" style="left:567px;top:118px" width="8" height="8" viewBox="0 0 8 8"><path d="M0.5 0.5L7.5 7.5M7.5 0.5L0.5 7.5" stroke="#fff" stroke-width="1"/></svg>
<div class="a" style="left:224px;top:130px;width:734px;height:2px;background:#0e72d0;"></div>
<div class="a" style="left:224px;top:132px;width:734px;height:27px;background:#f6f6f8;background:linear-gradient(#fdfdfd,#efeff1)"></div>
<svg class="a" style="left:236px;top:138px" width="18" height="15" viewBox="0 0 18 15"><path d="M1 3 Q1 1.5 2.5 1.5 H6.5 L8 3 H15.5 Q17 3 17 4.5 V13 Q17 14 16 14 H2 Q1 14 1 13Z" fill="#8cb4d8" stroke="#5a86b0" stroke-width="0.8"/><path d="M1 5.5H17V13Q17 14 16 14H2Q1 14 1 13Z" fill="#a9c9e6" stroke="#5a86b0" stroke-width="0.8"/></svg>
<svg class="a" style="left:264px;top:138px" width="15" height="15" viewBox="0 0 15 15"><path d="M1 1.5 H12 L14 3.5 V14 H1Z" fill="#4f7fa8" stroke="#2f5a80" stroke-width="0.9"/><rect x="3.5" y="1.5" width="7" height="5" fill="#e6eef5"/><rect x="4" y="9.5" width="7" height="4.5" fill="#e6eef5"/><rect x="7.5" y="10.5" width="2" height="2.5" fill="#2f5a80"/></svg>
<div class="a" style="left:289px;top:140px;width:1px;height:13px;background:#b8b8c0;"></div>
<svg class="a" style="left:297px;top:137px" width="17" height="18" viewBox="0 0 17 18"><path d="M9 1 H15 L10 7.5 H13.5 L4 17 L7 9.5 H3.5Z" fill="#f0c419" stroke="#a8861a" stroke-width="0.8" stroke-linejoin="round"/></svg>
<svg class="a" style="left:324px;top:137px" width="17" height="18" viewBox="0 0 17 18"><path d="M9 1 H15 L10 7.5 H13.5 L4 17 L7 9.5 H3.5Z" fill="#f0c419" stroke="#a8861a" stroke-width="0.8" stroke-linejoin="round"/><path d="M8.5 7V15M6.5 7H10.5M6.5 15H10.5" stroke="#222" stroke-width="1.1"/></svg>
<svg class="a" style="left:349px;top:137px" width="20" height="18" viewBox="0 0 20 18"><path d="M9 1 H15 L10 7.5 H13.5 L4 17 L7 9.5 H3.5Z" fill="#f0c419" stroke="#a8861a" stroke-width="0.8" stroke-linejoin="round"/><circle cx="10" cy="8" r="4.5" fill="#cfe0f2" stroke="#333" stroke-width="1.3"/><path d="M13 11.5L18 16.5" stroke="#333" stroke-width="2"/></svg>
<svg class="a" style="left:377px;top:137px" width="18" height="18" viewBox="0 0 18 18"><path d="M5 1 H13 L17 5 V13 L13 17 H5 L1 13 V5Z" fill="#d0d0d2"/><path d="M6 13 V6.5 M8 12 V4.5 M10 12 V4.5 M12 12 V6 M6 12 Q7 15 9.5 15 Q13 15 13 11 V8.5" fill="none" stroke="#f4f4f4" stroke-width="1.2"/></svg>
<div class="a" style="left:403px;top:140px;width:1px;height:13px;background:#b8b8c0;"></div>
<svg class="a" style="left:409px;top:137px" width="19" height="18" viewBox="0 0 19 18"><rect x="1" y="1" width="17" height="16" rx="2" fill="#eee" stroke="#777" stroke-width="0.9"/><circle cx="5.5" cy="5.5" r="4" fill="#e02020"/><path d="M3.8 3.8L7.2 7.2M7.2 3.8L3.8 7.2" stroke="#fff" stroke-width="1.1"/><circle cx="12" cy="11.5" r="5" fill="#e03030"/><path d="M3 10V14H7" fill="none" stroke="#555" stroke-width="0.9"/></svg>
<div class="a" style="left:436px;top:140px;width:1px;height:13px;background:#b8b8c0;"></div>
<svg class="a" style="left:442px;top:137px" width="18" height="18" viewBox="0 0 18 18"><circle cx="9" cy="9" r="8.3" fill="#cdcdcf"/><path d="M5 9.5L8 12.5L13 6" fill="none" stroke="#f2f2f2" stroke-width="2"/></svg>
<svg class="a" style="left:469px;top:137px" width="18" height="18" viewBox="0 0 18 18"><circle cx="9" cy="9" r="8.3" fill="#cdcdcf"/><path d="M6 6L12 12M12 6L6 12" stroke="#f2f2f2" stroke-width="2"/></svg>
<div class="a" style="left:495px;top:135px;width:23px;height:23px;background:#fff;border:1px solid #2a78d8"></div>
<svg class="a" style="left:497px;top:137px" width="19" height="19" viewBox="0 0 19 19"><rect x="1" y="1" width="17" height="17" rx="2" fill="#c9c9cc" stroke="#888" stroke-width="0.8"/><path d="M8 2 H12 L9 6.5 H11.5 L5 13 L7 8 H4.5Z" fill="#f0c419" stroke="#a8861a" stroke-width="0.6"/><circle cx="12.5" cy="12.5" r="4.2" fill="#4a90e2"/><path d="M10.5 12.5L12 14L14.5 11" fill="none" stroke="#fff" stroke-width="1.1"/></svg>
<div class="a" style="left:525px;top:140px;width:1px;height:13px;background:#b8b8c0;"></div>
<div class="a" style="left:528px;top:138px;width:123px;height:20px;background:#ffffff;"></div>
<div class="a" style="left:532px;top:138px;height:16px;line-height:16px;font-size:10.6px;color:#111;font-weight:normal;white-space:nowrap;">Limit to 1000 rows</div>
<div class="a" style="left:636px;top:138px;width:1px;height:20px;background:#f2f2f2;"></div>
<svg class="a" style="left:640px;top:144px" width="7" height="4" viewBox="0 0 7 4"><path d="M0 0H7L3.5 4Z" fill="#222"/></svg>
<div class="a" style="left:654px;top:140px;width:1px;height:13px;background:#b8b8c0;"></div>
<svg class="a" style="left:661px;top:137px" width="19" height="19" viewBox="0 0 19 19"><path d="M8 1 L10.2 6 L15.5 6.5 L11.5 10 L12.7 15.5 L8 12.5 L3.3 15.5 L4.5 10 L0.5 6.5 L5.8 6Z" fill="#f3c21a" stroke="#b08a10" stroke-width="0.7"/><circle cx="14.5" cy="14.5" r="4" fill="#3fa83f"/><path d="M12.3 14.5H16.7M14.5 12.3V16.7" stroke="#fff" stroke-width="1.4"/></svg>
<div class="a" style="left:686px;top:140px;width:1px;height:13px;background:#b8b8c0;"></div>
<svg class="a" style="left:692px;top:137px" width="19" height="17" viewBox="0 0 19 17"><path d="M2 10 L13 4 L17 11 Q12 16 5 15Z" fill="#c9a25a" stroke="#8a6a30" stroke-width="0.7"/><path d="M11 5L17 1" stroke="#6a4a20" stroke-width="1.6"/><path d="M4 11L15 7M5 13L16 9" stroke="#8a6a30" stroke-width="0.6"/></svg>
<svg class="a" style="left:719px;top:137px" width="19" height="18" viewBox="0 0 19 18"><circle cx="7.5" cy="7.5" r="6" fill="#fff" stroke="#666" stroke-width="1.4"/><path d="M5 10 L7.5 4 L10 10 M6 8H9" fill="none" stroke="#999" stroke-width="0.9"/><path d="M12 12L17 17" stroke="#555" stroke-width="2.2"/></svg>
<svg class="a" style="left:747px;top:136px" width="19" height="20" viewBox="0 0 19 20"><rect x="1" y="1" width="16" height="17" rx="2" fill="#f3f3f3" stroke="#888" stroke-width="0.8"/><path d="M10 4 V15 M13 4 V15 M13 4 H8.5 Q5 4 5 7 Q5 10 8.5 10 H10" fill="none" stroke="#222" stroke-width="1.4"/><path d="M8 4 Q5 4 5 7 Q5 10 8 10Z" fill="#222"/></svg>
<svg class="a" style="left:774px;top:136px" width="19" height="20" viewBox="0 0 19 20"><rect x="1" y="1" width="16" height="17" rx="2" fill="#f3f3f3" stroke="#888" stroke-width="0.8"/><path d="M13 5V11H6 M8.5 8.5L6 11L8.5 13.5 M4 5H9" fill="none" stroke="#222" stroke-width="1.3"/></svg>
<div class="a" style="left:224px;top:159px;width:718px;height:511px;background:#ffffff;"></div>
<div class="a" style="left:224px;top:159px;width:718px;height:511px;overflow:hidden">
<div class="a" style="left:70px;top:441.5px;width:646px;height:21px;background:#ececec"></div>
<div class="a mono" style="left:1px;top:1.0px;width:32px;height:21px;line-height:21px;text-align:right;font-size:11.67px;color:#1f6fb0">7</div>
<div class="a" style="left:40.5px;top:7.5px;width:6px;height:6px;border-radius:3px;background:#1677d2"></div>
<div class="a mono" style="left:70px;top:1.0px;height:21px;line-height:21px;font-size:11.67px;color:#111;white-space:pre;-webkit-text-stroke:0.1px currentColor"><span style="color:#1a7fc4">SELECT</span> p.product_category, <span style="color:#8a8a8a">SUM</span>(oi.quantity * oi.unit_price) <span style="color:#1a7fc4">AS</span> faturamento</div>
<div class="a mono" style="left:1px;top:22.0px;width:32px;height:21px;line-height:21px;text-align:right;font-size:11.67px;color:#1f6fb0">8</div>
<div class="a mono" style="left:70px;top:22.0px;height:21px;line-height:21px;font-size:11.67px;color:#111;white-space:pre;-webkit-text-stroke:0.1px currentColor"><span style="color:#1a7fc4">FROM</span> order_items oi</div>
<div class="a mono" style="left:1px;top:43.0px;width:32px;height:21px;line-height:21px;text-align:right;font-size:11.67px;color:#1f6fb0">9</div>
<div class="a mono" style="left:70px;top:43.0px;height:21px;line-height:21px;font-size:11.67px;color:#111;white-space:pre;-webkit-text-stroke:0.1px currentColor"><span style="color:#1a7fc4">JOIN</span> products p <span style="color:#1a7fc4">ON</span> oi.product_id = p.product_id</div>
<div class="a mono" style="left:1px;top:64.0px;width:32px;height:21px;line-height:21px;text-align:right;font-size:11.67px;color:#1f6fb0">10</div>
<div class="a mono" style="left:70px;top:64.0px;height:21px;line-height:21px;font-size:11.67px;color:#111;white-space:pre;-webkit-text-stroke:0.1px currentColor"><span style="color:#1a7fc4">GROUP</span> <span style="color:#1a7fc4">BY</span> p.product_category</div>
<div class="a mono" style="left:1px;top:85.0px;width:32px;height:21px;line-height:21px;text-align:right;font-size:11.67px;color:#1f6fb0">11</div>
<div class="a mono" style="left:70px;top:85.0px;height:21px;line-height:21px;font-size:11.67px;color:#111;white-space:pre;-webkit-text-stroke:0.1px currentColor"><span style="color:#1a7fc4">ORDER</span> <span style="color:#1a7fc4">BY</span> faturamento <span style="color:#1a7fc4">DESC</span>;</div>
<div class="a mono" style="left:1px;top:106.0px;width:32px;height:21px;line-height:21px;text-align:right;font-size:11.67px;color:#1f6fb0">12</div>
<div class="a mono" style="left:1px;top:127.0px;width:32px;height:21px;line-height:21px;text-align:right;font-size:11.67px;color:#1f6fb0">13</div>
<div class="a mono" style="left:70px;top:127.0px;height:21px;line-height:21px;font-size:11.67px;color:#111;white-space:pre;-webkit-text-stroke:0.1px currentColor"><span style="color:#1a88c9">-- Faturamento por região</span></div>
<div class="a mono" style="left:1px;top:148.0px;width:32px;height:21px;line-height:21px;text-align:right;font-size:11.67px;color:#1f6fb0">14</div>
<div class="a" style="left:40.5px;top:154.5px;width:6px;height:6px;border-radius:3px;background:#1677d2"></div>
<div class="a mono" style="left:70px;top:148.0px;height:21px;line-height:21px;font-size:11.67px;color:#111;white-space:pre;-webkit-text-stroke:0.1px currentColor"><span style="color:#1a7fc4">SELECT</span> region, <span style="color:#8a8a8a">SUM</span>(revenue) <span style="color:#1a7fc4">AS</span> faturamento</div>
<div class="a mono" style="left:1px;top:169.0px;width:32px;height:21px;line-height:21px;text-align:right;font-size:11.67px;color:#1f6fb0">15</div>
<div class="a mono" style="left:70px;top:169.0px;height:21px;line-height:21px;font-size:11.67px;color:#111;white-space:pre;-webkit-text-stroke:0.1px currentColor"><span style="color:#1a7fc4">FROM</span> orders</div>
<div class="a mono" style="left:1px;top:190.0px;width:32px;height:21px;line-height:21px;text-align:right;font-size:11.67px;color:#1f6fb0">16</div>
<div class="a mono" style="left:70px;top:190.0px;height:21px;line-height:21px;font-size:11.67px;color:#111;white-space:pre;-webkit-text-stroke:0.1px currentColor"><span style="color:#1a7fc4">GROUP</span> <span style="color:#1a7fc4">BY</span> region</div>
<div class="a mono" style="left:1px;top:211.0px;width:32px;height:21px;line-height:21px;text-align:right;font-size:11.67px;color:#1f6fb0">17</div>
<div class="a mono" style="left:70px;top:211.0px;height:21px;line-height:21px;font-size:11.67px;color:#111;white-space:pre;-webkit-text-stroke:0.1px currentColor"><span style="color:#1a7fc4">ORDER</span> <span style="color:#1a7fc4">BY</span> faturamento <span style="color:#1a7fc4">DESC</span>;</div>
<div class="a mono" style="left:1px;top:232.0px;width:32px;height:21px;line-height:21px;text-align:right;font-size:11.67px;color:#1f6fb0">18</div>
<div class="a mono" style="left:1px;top:253.0px;width:32px;height:21px;line-height:21px;text-align:right;font-size:11.67px;color:#1f6fb0">19</div>
<div class="a mono" style="left:70px;top:253.0px;height:21px;line-height:21px;font-size:11.67px;color:#111;white-space:pre;-webkit-text-stroke:0.1px currentColor"><span style="color:#1a88c9">-- Ticket médio por periodo</span></div>
<div class="a mono" style="left:1px;top:274.0px;width:32px;height:21px;line-height:21px;text-align:right;font-size:11.67px;color:#1f6fb0">20</div>
<div class="a" style="left:40.5px;top:280.5px;width:6px;height:6px;border-radius:3px;background:#1677d2"></div>
<div class="a mono" style="left:70px;top:274.0px;height:21px;line-height:21px;font-size:11.67px;color:#111;white-space:pre;-webkit-text-stroke:0.1px currentColor"><span style="color:#1a7fc4">SELECT</span> <span style="color:#1a7fc4">AVG</span>(revenue) <span style="color:#1a7fc4">AS</span> ticket_medio <span style="color:#1a7fc4">FROM</span> orders;</div>
<div class="a mono" style="left:1px;top:295.0px;width:32px;height:21px;line-height:21px;text-align:right;font-size:11.67px;color:#1f6fb0">21</div>
<div class="a mono" style="left:1px;top:316.0px;width:32px;height:21px;line-height:21px;text-align:right;font-size:11.67px;color:#1f6fb0">22</div>
<div class="a mono" style="left:70px;top:316.0px;height:21px;line-height:21px;font-size:11.67px;color:#111;white-space:pre;-webkit-text-stroke:0.1px currentColor"><span style="color:#1a88c9">-- Top 10 produtos mais lucrativos</span></div>
<div class="a" style="left:70px;top:337.0px;width:646px;height:21px;background:#c5dcf2"></div>
<div class="a mono" style="left:1px;top:337.0px;width:32px;height:21px;line-height:21px;text-align:right;font-size:11.67px;color:#1f6fb0">23</div>
<div class="a" style="left:40.5px;top:343.5px;width:6px;height:6px;border-radius:3px;background:#1677d2"></div>
<div class="a mono" style="left:70px;top:337.0px;height:21px;line-height:21px;font-size:11.67px;color:#111;white-space:pre;-webkit-text-stroke:0.1px currentColor"><span style="color:#1a7fc4">SELECT</span> p.product_category, <span style="color:#8a8a8a">SUM</span>(oi.quantity * oi.unit_price) - <span style="color:#8a8a8a">SUM</span>(oi.quantity * oi.unit_price) <span style="color:#1a7fc4">AS</span> lucro</div>
<div class="a" style="left:70px;top:358.0px;width:140.0px;height:21px;background:#c5dcf2"></div>
<div class="a mono" style="left:1px;top:358.0px;width:32px;height:21px;line-height:21px;text-align:right;font-size:11.67px;color:#1f6fb0">24</div>
<div class="a mono" style="left:70px;top:358.0px;height:21px;line-height:21px;font-size:11.67px;color:#111;white-space:pre;-webkit-text-stroke:0.1px currentColor"><span style="color:#1a7fc4">FROM</span> order_items oi</div>
<div class="a" style="left:70px;top:379.0px;width:336.0px;height:21px;background:#c5dcf2"></div>
<div class="a mono" style="left:1px;top:379.0px;width:32px;height:21px;line-height:21px;text-align:right;font-size:11.67px;color:#1f6fb0">25</div>
<div class="a mono" style="left:70px;top:379.0px;height:21px;line-height:21px;font-size:11.67px;color:#111;white-space:pre;-webkit-text-stroke:0.1px currentColor"><span style="color:#1a7fc4">JOIN</span> products p <span style="color:#1a7fc4">ON</span> oi.product_id = p.product_id</div>
<div class="a" style="left:70px;top:400.0px;width:196.0px;height:21px;background:#c5dcf2"></div>
<div class="a mono" style="left:1px;top:400.0px;width:32px;height:21px;line-height:21px;text-align:right;font-size:11.67px;color:#1f6fb0">26</div>
<div class="a mono" style="left:70px;top:400.0px;height:21px;line-height:21px;font-size:11.67px;color:#111;white-space:pre;-webkit-text-stroke:0.1px currentColor"><span style="color:#1a7fc4">GROUP</span> <span style="color:#1a7fc4">BY</span> p.product_category</div>
<div class="a" style="left:70px;top:421.0px;width:140.0px;height:21px;background:#c5dcf2"></div>
<div class="a mono" style="left:1px;top:421.0px;width:32px;height:21px;line-height:21px;text-align:right;font-size:11.67px;color:#1f6fb0">27</div>
<div class="a mono" style="left:70px;top:421.0px;height:21px;line-height:21px;font-size:11.67px;color:#111;white-space:pre;-webkit-text-stroke:0.1px currentColor"><span style="color:#1a7fc4">ORDER</span> <span style="color:#1a7fc4">BY</span> lucro <span style="color:#1a7fc4">DESC</span></div>
<div class="a" style="left:70px;top:442.0px;width:63.0px;height:21px;background:#bcd0e4"></div>
<div class="a mono" style="left:1px;top:442.0px;width:32px;height:21px;line-height:21px;text-align:right;font-size:11.67px;color:#1f6fb0">28</div>
<div class="a mono" style="left:70px;top:442.0px;height:21px;line-height:21px;font-size:11.67px;color:#111;white-space:pre;-webkit-text-stroke:0.1px currentColor"><span style="color:#1a7fc4">LIMIT</span> <span style="color:#a0703a">10</span>;</div>
<div class="a mono" style="left:1px;top:463.0px;width:32px;height:21px;line-height:21px;text-align:right;font-size:11.67px;color:#1f6fb0">29</div>
<div class="a mono" style="left:1px;top:484.0px;width:32px;height:21px;line-height:21px;text-align:right;font-size:11.67px;color:#1f6fb0">30</div>
<div class="a mono" style="left:70px;top:484.0px;height:21px;line-height:21px;font-size:11.67px;color:#111;white-space:pre;-webkit-text-stroke:0.1px currentColor"><span style="color:#1a88c9">-- Seguimento de clientes que gera mais lucro</span></div>
<div class="a mono" style="left:1px;top:505.0px;width:32px;height:21px;line-height:21px;text-align:right;font-size:11.67px;color:#1f6fb0">31</div>
<div class="a" style="left:40.5px;top:511.5px;width:6px;height:6px;border-radius:3px;background:#1677d2"></div>
<div class="a mono" style="left:70px;top:505.0px;height:21px;line-height:21px;font-size:11.67px;color:#111;white-space:pre;-webkit-text-stroke:0.1px currentColor"><span style="color:#1a7fc4">SELECT</span> c.customer_segment, <span style="color:#8a8a8a">SUM</span>(o.profit) <span style="color:#1a7fc4">AS</span> lucro_total</div>
</div>
<div class="a" style="left:942px;top:159px;width:16px;height:511px;background:#efeff2;"></div>
<div class="a" style="left:949px;top:245px;width:2px;height:425px;background:#7a7a7a;"></div>
<div class="a" style="left:224px;top:670px;width:734px;height:23px;background:#f0f0f3;"></div>
<div class="a" style="left:241px;top:679px;width:220px;height:2px;background:#6a6a6a;"></div>
<div class="a" style="left:224px;top:693px;width:676px;height:23px;background:#f5f5f7;"></div>
<div class="a" style="left:226px;top:697px;width:1px;height:15px;background:#8a8a9a;"></div>
<div class="a" style="left:235px;top:697px;height:16px;line-height:16px;font-size:10.3px;color:#222;font-weight:bold;white-space:nowrap;">Result Grid</div>
<div class="a" style="left:297px;top:697px;width:1px;height:15px;background:#8a8a9a;"></div>
<svg class="a" style="left:303px;top:698px" width="13" height="14" viewBox="0 0 13 14"><rect x="0.5" y="0.5" width="12" height="13" fill="#fff" stroke="#888" stroke-width="0.9"/><rect x="4.5" y="1" width="4" height="12" fill="#f3c21a"/><path d="M0.5 4H12.5M0.5 7H12.5M0.5 10H12.5M4.5 0.5V13.5M8.5 0.5V13.5" stroke="#888" stroke-width="0.7"/></svg>
<svg class="a" style="left:331px;top:697px" width="17" height="16" viewBox="0 0 17 16"><path d="M2 8 Q2 2.5 8 2.5 Q11.5 2.5 13 5 M15 8 Q15 13.5 9 13.5 Q5.5 13.5 4 11" fill="none" stroke="#3a7ad8" stroke-width="2.3"/><path d="M14.8 1.5V7H9.3Z M2.2 14.5V9H7.7Z" fill="#3a7ad8"/></svg>
<div class="a" style="left:355px;top:697px;height:16px;line-height:16px;font-size:10.2px;color:#222;font-weight:normal;white-space:nowrap;">Filter Rows:</div>
<div class="a" style="left:413px;top:695px;width:98px;height:19px;background:#fff;border:1px solid #dadade;border-bottom:2px solid #8a8a90"></div>
<div class="a" style="left:518px;top:697px;width:1px;height:15px;background:#8a8a9a;"></div>
<div class="a" style="left:522px;top:697px;height:16px;line-height:16px;font-size:10.2px;color:#222;font-weight:normal;white-space:nowrap;">Export:</div>
<svg class="a" style="left:562px;top:697px" width="19" height="17" viewBox="0 0 19 17"><rect x="0.5" y="0.5" width="10" height="9" fill="#fff" stroke="#999" stroke-width="0.8"/><path d="M0.5 3.5H10.5M0.5 6.5H10.5M4 0.5V9.5M7 0.5V9.5" stroke="#999" stroke-width="0.6"/><path d="M6 5 H16 L18 7 V16.5 H6Z" fill="#6a8fb8" stroke="#3a5f88" stroke-width="0.8"/><rect x="8.5" y="5.5" width="6" height="4" fill="#e8eef5"/><rect x="8.5" y="12" width="6" height="4" fill="#e8eef5"/></svg>
<div class="a" style="left:588px;top:697px;width:1px;height:15px;background:#8a8a9a;"></div>
<div class="a" style="left:593px;top:697px;height:16px;line-height:16px;font-size:10.2px;color:#222;font-weight:normal;white-space:nowrap;">Wrap Cell Content:</div>
<svg class="a" style="left:689px;top:698px" width="14" height="14" viewBox="0 0 14 14"><path d="M1 1H6M3.5 1V12M1 12H6M1 13.5H13" stroke="#444" stroke-width="0.9"/><path d="M6.5 11 L9.5 3 L12.5 11M7.7 8H11.3" fill="none" stroke="#444" stroke-width="0.9"/></svg>
<svg class="a" style="left:878px;top:697px" width="16" height="15" viewBox="0 0 16 15"><rect x="0.7" y="0.7" width="14.6" height="13.6" fill="#fff" stroke="#222" stroke-width="1.4"/><rect x="10" y="0.7" width="5.3" height="13.6" fill="#555"/></svg>
<div class="a" style="left:224px;top:716px;width:676px;height:177px;background:#ffffff;"></div>
<div class="a" style="left:224px;top:716px;width:186px;height:2px;background:#9a9a9a;"></div>
<div class="a" style="left:224px;top:716px;width:1px;height:106px;background:#9a9a9a;"></div>
<div class="a" style="left:249px;top:716px;width:1px;height:106px;background:#9a9a9a;"></div>
<div class="a" style="left:351px;top:718px;width:1px;height:18px;background:#e0e0e0;"></div>
<div class="a" style="left:409px;top:718px;width:1px;height:18px;background:#e0e0e0;"></div>
<div class="a" style="left:224px;top:735px;width:186px;height:2px;background:#a5a5a5;"></div>
<div class="a" style="left:256px;top:719px;height:16px;line-height:16px;font-size:11.1px;color:#111;font-weight:normal;white-space:nowrap;">product_category</div>
<div class="a" style="left:359px;top:719px;height:16px;line-height:16px;font-size:11.1px;color:#111;font-weight:normal;white-space:nowrap;">lucro</div>
<div class="a" style="left:225px;top:754px;width:24px;height:1px;background:#e3e3e3;"></div>
<div class="a" style="left:252px;top:738px;height:16px;line-height:16px;font-size:10.8px;color:#111;font-weight:normal;white-space:nowrap;">Eletronics</div>
<div class="a" style="left:356px;top:738px;height:16px;line-height:16px;font-size:10.8px;color:#111;font-weight:normal;white-space:nowrap;">300.000</div>
<div class="a" style="left:251px;top:755px;width:100px;height:16px;background:#e9f0fa;"></div>
<div class="a" style="left:353px;top:755px;width:56px;height:16px;background:#e9f0fa;"></div>
<div class="a" style="left:225px;top:771px;width:24px;height:1px;background:#e3e3e3;"></div>
<div class="a" style="left:252px;top:755px;height:16px;line-height:16px;font-size:10.8px;color:#111;font-weight:normal;white-space:nowrap;">Clothing</div>
<div class="a" style="left:356px;top:755px;height:16px;line-height:16px;font-size:10.8px;color:#111;font-weight:normal;white-space:nowrap;">48.000</div>
<div class="a" style="left:225px;top:788px;width:24px;height:1px;background:#e3e3e3;"></div>
<div class="a" style="left:252px;top:772px;height:16px;line-height:16px;font-size:10.8px;color:#111;font-weight:normal;white-space:nowrap;">Beauty</div>
<div class="a" style="left:356px;top:772px;height:16px;line-height:16px;font-size:10.8px;color:#111;font-weight:normal;white-space:nowrap;">36.000</div>
<div class="a" style="left:251px;top:789px;width:100px;height:16px;background:#e9f0fa;"></div>
<div class="a" style="left:353px;top:789px;width:56px;height:16px;background:#e9f0fa;"></div>
<div class="a" style="left:225px;top:805px;width:24px;height:1px;background:#e3e3e3;"></div>
<div class="a" style="left:252px;top:789px;height:16px;line-height:16px;font-size:10.8px;color:#111;font-weight:normal;white-space:nowrap;">Furniture</div>
<div class="a" style="left:356px;top:789px;height:16px;line-height:16px;font-size:10.8px;color:#111;font-weight:normal;white-space:nowrap;">30.000</div>
<div class="a" style="left:225px;top:822px;width:24px;height:1px;background:#e3e3e3;"></div>
<div class="a" style="left:252px;top:806px;height:16px;line-height:16px;font-size:10.8px;color:#111;font-weight:normal;white-space:nowrap;">Books</div>
<div class="a" style="left:356px;top:806px;height:16px;line-height:16px;font-size:10.8px;color:#111;font-weight:normal;white-space:nowrap;">15.000</div>
<svg class="a" style="left:230px;top:741px" width="6" height="9" viewBox="0 0 6 9"><path d="M0 0L6 4.5L0 9Z" fill="#222"/></svg>
<div class="a" style="left:900px;top:693px;width:58px;height:200px;background:#e6e6e9;"></div>
<div class="a" style="left:900px;top:693px;width:58px;height:68px;background:#0e72d0;"></div>
<svg class="a" style="left:900px;top:721px" width="8" height="15" viewBox="0 0 8 15"><path d="M0 0 L7.5 7.5 L0 15Z" fill="#ffffff"/></svg>
<svg class="a" style="left:915px;top:697px" width="29" height="29" viewBox="0 0 29 29"><rect x="1.5" y="1.5" width="26" height="26" rx="2" fill="#f4f4f4"/><rect x="3" y="4" width="23" height="22" fill="#0a4a90"/><rect x="4.5" y="6" width="5.5" height="1.8" fill="#fff"/><rect x="11.5" y="6" width="5.5" height="1.8" fill="#fff"/><rect x="18.5" y="6" width="5.5" height="1.8" fill="#fff"/><rect x="4.5" y="10" width="5.5" height="1.8" fill="#fff"/><rect x="11.5" y="10" width="5.5" height="1.8" fill="#fff"/><rect x="18.5" y="10" width="5.5" height="1.8" fill="#fff"/><rect x="4.5" y="14" width="5.5" height="1.8" fill="#fff"/><rect x="11.5" y="14" width="5.5" height="1.8" fill="#fff"/><rect x="18.5" y="14" width="5.5" height="1.8" fill="#fff"/><rect x="4.5" y="18" width="5.5" height="1.8" fill="#fff"/><rect x="11.5" y="18" width="5.5" height="1.8" fill="#fff"/><rect x="18.5" y="18" width="5.5" height="1.8" fill="#fff"/><rect x="4.5" y="22" width="5.5" height="1.8" fill="#fff"/><rect x="11.5" y="22" width="5.5" height="1.8" fill="#fff"/><rect x="18.5" y="22" width="5.5" height="1.8" fill="#fff"/></svg>
<div class="a" style="left:900px;top:730px;height:16px;line-height:16px;font-size:10.6px;color:#fff;font-weight:normal;white-space:nowrap;width:58px;text-align:center">Result</div>
<div class="a" style="left:900px;top:740px;height:16px;line-height:16px;font-size:10.6px;color:#fff;font-weight:normal;white-space:nowrap;width:58px;text-align:center">Grid</div>
<svg class="a" style="left:914px;top:766px" width="29" height="28" viewBox="0 0 29 28"><rect x="1.5" y="1.5" width="26" height="25" rx="1.5" fill="#f2f2f2" stroke="#d0d0d0" stroke-width="1"/><path d="M5 6H24M5 6V22M10 10H22M10 14H18M10 18H22M7 10V22" stroke="#c8c8c8" stroke-width="1"/></svg>
<div class="a" style="left:900px;top:797px;height:16px;line-height:16px;font-size:10.6px;color:#7a7a7a;font-weight:normal;white-space:nowrap;width:58px;text-align:center">Form</div>
<div class="a" style="left:900px;top:807px;height:16px;line-height:16px;font-size:10.6px;color:#7a7a7a;font-weight:normal;white-space:nowrap;width:58px;text-align:center">Editor</div>
<svg class="a" style="left:917px;top:860px" width="24" height="30" viewBox="0 0 24 30"><path d="M3 11 L12 3 L21 11" fill="none" stroke="#dcdcdc" stroke-width="3"/><path d="M3 19 L12 27 L21 19" fill="none" stroke="#cfcfcf" stroke-width="3"/></svg>
<div class="a" style="left:224px;top:893px;width:734px;height:2px;background:#ffffff;"></div>
<div class="a" style="left:224px;top:895px;width:734px;height:19px;background:#e6e6e9;"></div>
<div class="a" style="left:224px;top:893px;width:71px;height:21px;background:#ffffff;"></div>
<div class="a" style="left:224px;top:914px;width:734px;height:6px;background:#f0f0f3;"></div>
<div class="a" style="left:231px;top:896px;height:16px;line-height:16px;font-size:11.6px;color:#2a72c8;font-weight:normal;white-space:nowrap;">Result 8</div>
<svg class="a" style="left:280px;top:900px" width="8" height="8" viewBox="0 0 8 8"><path d="M0.5 0.5L7.5 7.5M7.5 0.5L0.5 7.5" stroke="#444" stroke-width="1"/></svg>
<svg class="a" style="left:883px;top:898px" width="12" height="12" viewBox="0 0 12 12"><circle cx="6" cy="6" r="5.6" fill="#2a6fc0"/><rect x="5.1" y="2.5" width="1.8" height="4.6" fill="#fff"/><rect x="5.1" y="8.2" width="1.8" height="1.6" fill="#fff"/></svg>
<div class="a" style="left:903px;top:896px;height:16px;line-height:16px;font-size:11.5px;color:#111;font-weight:normal;white-space:nowrap;">Read Only</div>
<div class="a" style="left:224px;top:920px;width:734px;height:21px;background:#e6e6e9;"></div>
<div class="a" style="left:231px;top:922px;height:16px;line-height:16px;font-size:11.6px;color:#6e6e6e;font-weight:normal;white-space:nowrap;">Output</div>
<div class="a" style="left:268px;top:927px;width:684px;height:6px;background-image:linear-gradient(45deg,#c4c4c8 25%,transparent 25%,transparent 75%,#c4c4c8 75%),linear-gradient(45deg,#c4c4c8 25%,transparent 25%,transparent 75%,#c4c4c8 75%);background-size:2px 2px;background-position:0 0,1px 1px;opacity:0.55"></div>
<div class="a" style="left:224px;top:941px;width:734px;height:27px;background:#f5f5f7;"></div>
<svg class="a" style="left:231px;top:948px" width="15" height="14" viewBox="0 0 15 14"><rect x="0.7" y="4.7" width="9" height="9" fill="#fff" stroke="#333" stroke-width="1.1"/><path d="M3.5 4.5V1H13.5V11H10" fill="none" stroke="#333" stroke-width="1.1"/></svg>
<div class="a" style="left:252px;top:946px;width:151px;height:20px;background:#ffffff;"></div>
<div class="a" style="left:256px;top:948px;height:16px;line-height:16px;font-size:10.7px;color:#111;font-weight:normal;white-space:nowrap;">Action Output</div>
<div class="a" style="left:390px;top:947px;width:11px;height:18px;background:#ececee;"></div>
<svg class="a" style="left:392px;top:954px" width="7" height="4" viewBox="0 0 7 4"><path d="M0 0H7L3.5 4Z" fill="#222"/></svg>
<div class="a" style="left:224px;top:968px;width:718px;height:54px;background:#ffffff;"></div>
<div class="a" style="left:0px;top:1022px;width:964px;height:6px;background:#efeff2;"></div>
<div class="a" style="left:246px;top:970px;width:1px;height:18px;background:#e4e4e4;"></div>
<div class="a" style="left:282px;top:970px;width:1px;height:18px;background:#e4e4e4;"></div>
<div class="a" style="left:332px;top:970px;width:1px;height:18px;background:#e4e4e4;"></div>
<div class="a" style="left:580px;top:970px;width:1px;height:18px;background:#e4e4e4;"></div>
<div class="a" style="left:827px;top:970px;width:1px;height:18px;background:#e4e4e4;"></div>
<div class="a" style="left:943px;top:970px;width:1px;height:18px;background:#e4e4e4;"></div>
<div class="a" style="left:255px;top:970px;height:16px;line-height:16px;font-size:10.4px;color:#222;font-weight:normal;white-space:nowrap;">#</div>
<div class="a" style="left:288px;top:970px;height:16px;line-height:16px;font-size:10.4px;color:#222;font-weight:normal;white-space:nowrap;">Time</div>
<div class="a" style="left:339px;top:970px;height:16px;line-height:16px;font-size:10.4px;color:#222;font-weight:normal;white-space:nowrap;">Action</div>
<div class="a" style="left:586px;top:970px;height:16px;line-height:16px;font-size:10.4px;color:#222;font-weight:normal;white-space:nowrap;">Message</div>
<div class="a" style="left:833px;top:970px;height:16px;line-height:16px;font-size:10.4px;color:#222;font-weight:normal;white-space:nowrap;">Duration / Fetch</div>
<div class="a" style="left:246px;top:1006px;width:694px;height:16px;background:#e8f0fb;"></div>
<svg class="a" style="left:229px;top:990.5px" width="12" height="12" viewBox="0 0 12 12"><circle cx="6" cy="6" r="5.8" fill="#1f9a3a"/><path d="M3 6.2L5.2 8.4L9.2 4" fill="none" stroke="#fff" stroke-width="1.6"/></svg>
<div class="a" style="left:257px;top:988.5px;height:16px;line-height:16px;font-size:11px;color:#111;font-weight:normal;white-space:nowrap;width:20px;text-align:right">29</div>
<div class="a" style="left:286px;top:988.5px;height:16px;line-height:16px;font-size:11px;color:#111;font-weight:normal;white-space:nowrap;">18:45:46</div>
<div class="a" style="left:336px;top:988.5px;height:16px;line-height:16px;font-size:10.7px;color:#111;font-weight:normal;white-space:nowrap;">SELECT p.product_category, SUM(oi.quantity * ...</div>
<div class="a" style="left:583px;top:988.5px;height:16px;line-height:16px;font-size:10.7px;color:#111;font-weight:normal;white-space:nowrap;">5 row(s) returned</div>
<div class="a" style="left:833px;top:988.5px;height:16px;line-height:16px;font-size:10.7px;color:#111;font-weight:normal;white-space:nowrap;">0.015 sec / 0.000 sec</div>
<div class="a" style="left:0px;top:1006px;width:964px;height:16px;overflow:hidden"><div class="a" style="left:0;top:-1006px;width:964px;height:1100px">
<svg class="a" style="left:229px;top:1011.5px" width="12" height="12" viewBox="0 0 12 12"><circle cx="6" cy="6" r="5.8" fill="#1f9a3a"/><path d="M3 6.2L5.2 8.4L9.2 4" fill="none" stroke="#fff" stroke-width="1.6"/></svg>
<div class="a" style="left:257px;top:1009.5px;height:16px;line-height:16px;font-size:11px;color:#111;font-weight:normal;white-space:nowrap;width:20px;text-align:right">30</div>
<div class="a" style="left:286px;top:1009.5px;height:16px;line-height:16px;font-size:11px;color:#111;font-weight:normal;white-space:nowrap;">19:19:29</div>
<div class="a" style="left:336px;top:1009.5px;height:16px;line-height:16px;font-size:10.7px;color:#111;font-weight:normal;white-space:nowrap;">SELECT p.product_category, SUM(oi.quantity * ...</div>
<div class="a" style="left:583px;top:1009.5px;height:16px;line-height:16px;font-size:10.7px;color:#111;font-weight:normal;white-space:nowrap;">5 row(s) returned</div>
<div class="a" style="left:833px;top:1009.5px;height:16px;line-height:16px;font-size:10.7px;color:#111;font-weight:normal;white-space:nowrap;">0.015 sec / 0.000 sec</div>
</div></div>
<div class="a" style="left:950px;top:1013px;width:1px;height:10px;background:#555;"></div>

</div>
<div id="tb">
<svg class="a" style="left:17px;top:6px" width="30" height="28" viewBox="0 0 30 28"><path d="M8 24 A9 9 0 0 0 22 14 A7 7 0 0 1 8 24Z" fill="#f2a61c"/><ellipse cx="8" cy="9" rx="6.5" ry="3.8" fill="#c9dcf2"/><ellipse cx="9" cy="7.5" rx="3.5" ry="3" fill="#dbe8f7"/><ellipse cx="19" cy="22" rx="7" ry="3.8" fill="#c9dcf2"/><ellipse cx="19" cy="20" rx="3.8" ry="3.2" fill="#e3eefa"/></svg>
<svg class="a" style="left:29px;top:4px" width="18" height="18" viewBox="0 0 18 18"><circle cx="9" cy="9" r="8" fill="#f59aa5"/><text x="9" y="13" text-anchor="middle" font-family="Liberation Sans" font-size="11" fill="#222">3</text></svg>
<div class="a" style="left:50px;top:7px;height:16px;line-height:16px;font-size:11.4px;color:#fff;white-space:nowrap;">26°C</div>
<div class="a" style="left:50px;top:23px;height:16px;line-height:16px;font-size:11.8px;color:#d8d8d8;white-space:nowrap;">Parc. nublado</div>
<svg class="a" style="left:750px;top:12px" width="24" height="24" viewBox="0 0 24 24"><defs><linearGradient id="wg" x1="0" y1="0" x2="1" y2="1"><stop offset="0" stop-color="#6fd0ff"/><stop offset="1" stop-color="#1a8fe0"/></linearGradient></defs><rect x="0" y="0" width="11.3" height="11.3" rx="1" fill="url(#wg)"/><rect x="12.3" y="0" width="11.3" height="11.3" rx="1" fill="url(#wg)"/><rect x="0" y="12.3" width="11.3" height="11.3" rx="1" fill="url(#wg)"/><rect x="12.3" y="12.3" width="11.3" height="11.3" rx="1" fill="url(#wg)"/></svg>
<svg class="a" style="left:795px;top:12px" width="24" height="24" viewBox="0 0 24 24"><circle cx="12" cy="12" r="11" fill="#fff"/><circle cx="12" cy="12" r="9.6" fill="#c8232c"/><path d="M11 18.5 L12.5 12 M10 15.5 Q7.5 13.5 8.5 10 Q10 6.5 13.5 7 Q17 7.5 16.5 11 Q16 14.5 13 14.5 Q11.5 14.5 11.5 13" fill="none" stroke="#fff" stroke-width="1.8" stroke-linecap="round"/></svg>
<svg class="a" style="left:839px;top:11px" width="23" height="26" viewBox="0 0 23 26"><path d="M4 3 L8 1 H15 L19 3 L22 6 L21 15 Q20 20 11.5 25 Q3 20 2 15 L1 6Z" fill="#f1562b"/><path d="M7 9 L10 10.5 L11.5 9.5 L13 10.5 L16 9 L15 14 L13 17 H10 L8 14Z" fill="#fff"/></svg>
<svg class="a" style="left:882px;top:11px" width="26" height="24" viewBox="0 0 26 24"><path d="M1 3 Q1 1 3 1 H9.5 L12 3.5 H23 Q25 3.5 25 5.5 V21 Q25 23 23 23 H3 Q1 23 1 21Z" fill="#e9a916"/><path d="M1 7 H25 V21 Q25 23 23 23 H3 Q1 23 1 21Z" fill="#ffd34f"/><rect x="7" y="15" width="12" height="8" rx="1" fill="#1c7ad4"/></svg>
<svg class="a" style="left:926px;top:13px" width="25" height="20" viewBox="0 0 25 20"><path d="M5 1 H24 L20 19 H1Z" fill="#1d2433" stroke="#4a5570" stroke-width="0.8"/><path d="M7 5 L12 9.5 L6 14" fill="none" stroke="#fff" stroke-width="1.8"/><path d="M12 14.5 H17" stroke="#fff" stroke-width="1.6"/></svg>
<svg class="a" style="left:970px;top:11px" width="26" height="25" viewBox="0 0 26 25"><path d="M18 1 L24.5 4.2 V20.8 L18 24Z" fill="#1b86d8"/><path d="M18 1 L18 7 L4 18 L1.5 16Z" fill="#2aa4f4"/><path d="M18 24 L18 18 L4 7 L1.5 9Z" fill="#2496e6"/></svg>
<div class="a" style="left:980px;top:39px;width:7px;height:3px;border-radius:2px;background:#8a8a8a"></div>
<svg class="a" style="left:1015px;top:11px" width="25" height="25" viewBox="0 0 25 25"><circle cx="12.5" cy="12.5" r="12" fill="#db4437"/><path d="M12.5 12.5 L2.1 6.5 A12 12 0 0 0 6.5 22.9Z" fill="#0f9d58"/><path d="M12.5 12.5 L6.5 22.9 A12 12 0 0 0 24.5 12.5Z" fill="#ffcd40"/><path d="M12.5 12.5 L24.5 12.5 A12 12 0 0 0 22.9 6.5 H12.5Z" fill="#db4437"/><circle cx="12.5" cy="12.5" r="5.5" fill="#fff"/><circle cx="12.5" cy="12.5" r="4.3" fill="#4285f4"/></svg>
<div class="a" style="left:1024px;top:39px;width:7px;height:3px;border-radius:2px;background:#8a8a8a"></div>
<div class="a" style="left:1051px;top:3px;width:40px;height:40px;border-radius:4px;background:#2b2b2b"></div>
<svg class="a" style="left:1059px;top:11px" width="25" height="24" viewBox="0 0 25 24"><rect x="0.5" y="0.5" width="24" height="23" rx="2" fill="#1f4a72"/><path d="M4 6 Q12 4 19 17 M4 6 Q4 12 8 16 Q9 18 11 17" fill="none" stroke="#c8dff0" stroke-width="1"/><path d="M18 2 L22 6 M21 2 L18 5" stroke="#d8e8f4" stroke-width="1.2"/></svg>
<div class="a" style="left:1063px;top:39px;width:17px;height:3px;border-radius:2px;background:#9ccff0"></div>
<svg class="a" style="left:1102px;top:11px" width="23" height="25" viewBox="0 0 23 25"><rect x="7" y="1" width="15" height="10" rx="1.5" fill="#4ec36e"/><rect x="7" y="10" width="15" height="13" rx="1.5" fill="#1e8e46"/><rect x="12" y="5" width="10" height="10" fill="#2fae5a"/><rect x="1" y="10" width="11" height="11" rx="1.5" fill="#107c41"/><text x="6.5" y="19" text-anchor="middle" font-family="Liberation Sans" font-weight="bold" font-size="8" fill="#fff">X</text></svg>
<svg class="a" style="left:1147px;top:11px" width="22" height="25" viewBox="0 0 22 25"><rect x="13" y="1" width="8" height="23" rx="1" fill="#e8a80c"/><rect x="7" y="7" width="8" height="17" rx="1" fill="#f2c811"/><rect x="1" y="13" width="8" height="11" rx="1" fill="#fbe15a"/></svg>
<svg class="a" style="left:1620px;top:18px" width="14" height="9" viewBox="0 0 14 9"><path d="M1.5 7.5 L7 2 L12.5 7.5" fill="none" stroke="#fff" stroke-width="1.4"/></svg>
<svg class="a" style="left:1650px;top:16px" width="19" height="16" viewBox="0 0 19 16"><ellipse cx="8" cy="8" rx="6.5" ry="5" fill="#d0d0d0"/><ellipse cx="10" cy="5.5" rx="4" ry="3.8" fill="#e0e0e0"/><circle cx="13" cy="11" r="4.6" fill="#0f6fd8"/><rect x="12.3" y="9.8" width="1.4" height="3.8" fill="#fff"/><rect x="12.3" y="7.8" width="1.4" height="1.3" fill="#fff"/></svg>
<div class="a" style="left:1686px;top:8px;height:16px;line-height:16px;font-size:10.8px;color:#fff;white-space:nowrap;">POR</div>
<div class="a" style="left:1684px;top:23px;height:16px;line-height:16px;font-size:10.9px;color:#fff;white-space:nowrap;">PTB2</div>
<svg class="a" style="left:1726px;top:16px" width="18" height="14" viewBox="0 0 18 14"><path d="M1.5 5 Q9 -1.5 16.5 5 M4 7.5 Q9 3 14 7.5 M6.5 10 Q9 8 11.5 10" fill="none" stroke="#fff" stroke-width="1.4"/><circle cx="9" cy="12.3" r="1.3" fill="#fff"/></svg>
<svg class="a" style="left:1750px;top:15px" width="18" height="15" viewBox="0 0 18 15"><path d="M1.5 5 H4.5 L8.5 1.5 V13.5 L4.5 10 H1.5Z" fill="none" stroke="#fff" stroke-width="1.2" stroke-linejoin="round"/><path d="M11 5 Q12.5 7.5 11 10 M13 3.5 Q15.5 7.5 13 11.5 M15 2 Q18.5 7.5 15 13" fill="none" stroke="#fff" stroke-width="1.1"/></svg>
<svg class="a" style="left:1774px;top:17px" width="21" height="12" viewBox="0 0 21 12"><rect x="1" y="1" width="17" height="10" rx="2.5" fill="none" stroke="#fff" stroke-width="1.2"/><rect x="3" y="3" width="7.5" height="6" rx="1" fill="#f0a818"/><rect x="18.5" y="4" width="1.5" height="4" fill="#fff"/></svg>
<div class="a" style="left:1799px;top:15px;height:16px;line-height:16px;font-size:11.2px;color:#fff;white-space:nowrap;">53%</div>
<div class="a" style="left:1872px;top:7px;height:16px;line-height:16px;font-size:11.6px;color:#fff;white-space:nowrap;width:30px;text-align:right">19:19</div>
<div class="a" style="left:1839px;top:23px;height:16px;line-height:16px;font-size:12.3px;color:#fff;white-space:nowrap;">13/02/2026</div>
</div>
</body></html>
